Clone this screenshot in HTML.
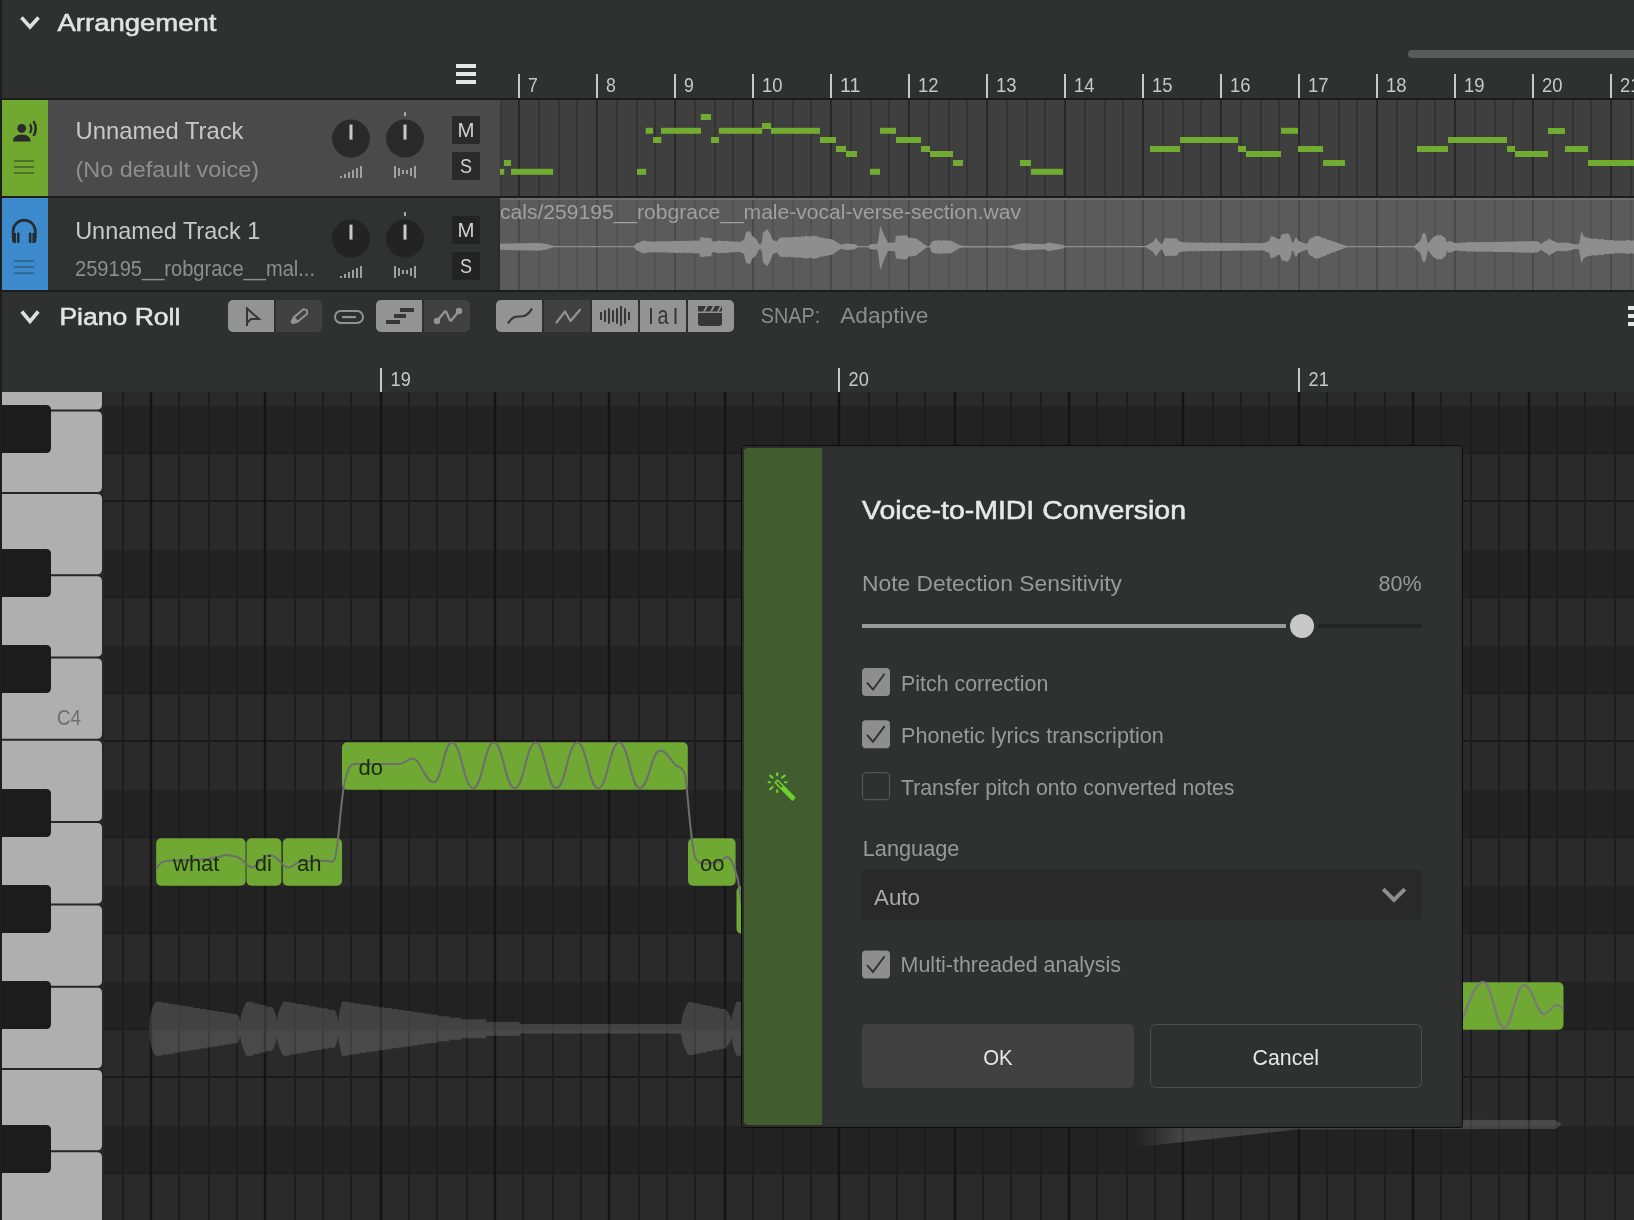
<!DOCTYPE html>
<html><head><meta charset="utf-8"><title>Voice-to-MIDI</title>
<style>html,body{margin:0;padding:0;background:#2f3030;overflow:hidden}svg{display:block;will-change:transform}text{font-family:"Liberation Sans", sans-serif}</style>
</head><body>
<svg width="1634" height="1220" viewBox="0 0 1634 1220">
<rect x="0" y="0" width="1634" height="1220" fill="#2f3030"/>
<path d="M21.5,17.5 L30,27 L38.5,17.5" fill="none" stroke="#e0e0e0" stroke-width="3.6" stroke-linecap="butt" stroke-linejoin="miter"/>
<text x="57.5" y="31" font-size="24.5" fill="#e2e2e2" font-weight="normal" text-anchor="start" textLength="159" lengthAdjust="spacingAndGlyphs" stroke="#e2e2e2" stroke-width="0.55">Arrangement</text>
<rect x="456" y="64" width="20" height="4" fill="#e6e6e6"/>
<rect x="456" y="72" width="20" height="4" fill="#e6e6e6"/>
<rect x="456" y="80" width="20" height="4" fill="#e6e6e6"/>
<rect x="1408" y="50" width="240" height="8" fill="#5a5a5a" rx="4"/>
<rect x="518" y="74" width="2" height="24" fill="#c8c8c8"/>
<text x="528" y="92" font-size="21" fill="#c8c8c8" font-weight="normal" text-anchor="start" textLength="9.8" lengthAdjust="spacingAndGlyphs">7</text>
<rect x="596" y="74" width="2" height="24" fill="#c8c8c8"/>
<text x="606" y="92" font-size="21" fill="#c8c8c8" font-weight="normal" text-anchor="start" textLength="9.8" lengthAdjust="spacingAndGlyphs">8</text>
<rect x="674" y="74" width="2" height="24" fill="#c8c8c8"/>
<text x="684" y="92" font-size="21" fill="#c8c8c8" font-weight="normal" text-anchor="start" textLength="9.8" lengthAdjust="spacingAndGlyphs">9</text>
<rect x="752" y="74" width="2" height="24" fill="#c8c8c8"/>
<text x="762" y="92" font-size="21" fill="#c8c8c8" font-weight="normal" text-anchor="start" textLength="20.5" lengthAdjust="spacingAndGlyphs">10</text>
<rect x="830" y="74" width="2" height="24" fill="#c8c8c8"/>
<text x="840" y="92" font-size="21" fill="#c8c8c8" font-weight="normal" text-anchor="start" textLength="20.5" lengthAdjust="spacingAndGlyphs">11</text>
<rect x="908" y="74" width="2" height="24" fill="#c8c8c8"/>
<text x="918" y="92" font-size="21" fill="#c8c8c8" font-weight="normal" text-anchor="start" textLength="20.5" lengthAdjust="spacingAndGlyphs">12</text>
<rect x="986" y="74" width="2" height="24" fill="#c8c8c8"/>
<text x="996" y="92" font-size="21" fill="#c8c8c8" font-weight="normal" text-anchor="start" textLength="20.5" lengthAdjust="spacingAndGlyphs">13</text>
<rect x="1064" y="74" width="2" height="24" fill="#c8c8c8"/>
<text x="1074" y="92" font-size="21" fill="#c8c8c8" font-weight="normal" text-anchor="start" textLength="20.5" lengthAdjust="spacingAndGlyphs">14</text>
<rect x="1142" y="74" width="2" height="24" fill="#c8c8c8"/>
<text x="1152" y="92" font-size="21" fill="#c8c8c8" font-weight="normal" text-anchor="start" textLength="20.5" lengthAdjust="spacingAndGlyphs">15</text>
<rect x="1220" y="74" width="2" height="24" fill="#c8c8c8"/>
<text x="1230" y="92" font-size="21" fill="#c8c8c8" font-weight="normal" text-anchor="start" textLength="20.5" lengthAdjust="spacingAndGlyphs">16</text>
<rect x="1298" y="74" width="2" height="24" fill="#c8c8c8"/>
<text x="1308" y="92" font-size="21" fill="#c8c8c8" font-weight="normal" text-anchor="start" textLength="20.5" lengthAdjust="spacingAndGlyphs">17</text>
<rect x="1376" y="74" width="2" height="24" fill="#c8c8c8"/>
<text x="1386" y="92" font-size="21" fill="#c8c8c8" font-weight="normal" text-anchor="start" textLength="20.5" lengthAdjust="spacingAndGlyphs">18</text>
<rect x="1454" y="74" width="2" height="24" fill="#c8c8c8"/>
<text x="1464" y="92" font-size="21" fill="#c8c8c8" font-weight="normal" text-anchor="start" textLength="20.5" lengthAdjust="spacingAndGlyphs">19</text>
<rect x="1532" y="74" width="2" height="24" fill="#c8c8c8"/>
<text x="1542" y="92" font-size="21" fill="#c8c8c8" font-weight="normal" text-anchor="start" textLength="20.5" lengthAdjust="spacingAndGlyphs">20</text>
<rect x="1610" y="74" width="2" height="24" fill="#c8c8c8"/>
<text x="1620" y="92" font-size="21" fill="#c8c8c8" font-weight="normal" text-anchor="start" textLength="20.5" lengthAdjust="spacingAndGlyphs">21</text>
<rect x="0" y="98" width="1634" height="2" fill="#1c1c1c"/>
<rect x="48" y="100" width="452.5" height="96" fill="#4a4a4a"/>
<rect x="2" y="100" width="46" height="96" fill="#70a830"/>
<rect x="500" y="100" width="1134" height="96" fill="#3f3f3f"/>
<rect x="518" y="100" width="2" height="96" fill="#282828"/>
<rect x="538" y="100" width="2" height="96" fill="#333333"/>
<rect x="558" y="100" width="2" height="96" fill="#333333"/>
<rect x="576" y="100" width="2" height="96" fill="#333333"/>
<rect x="596" y="100" width="2" height="96" fill="#282828"/>
<rect x="616" y="100" width="2" height="96" fill="#333333"/>
<rect x="636" y="100" width="2" height="96" fill="#333333"/>
<rect x="654" y="100" width="2" height="96" fill="#333333"/>
<rect x="674" y="100" width="2" height="96" fill="#282828"/>
<rect x="694" y="100" width="2" height="96" fill="#333333"/>
<rect x="714" y="100" width="2" height="96" fill="#333333"/>
<rect x="732" y="100" width="2" height="96" fill="#333333"/>
<rect x="752" y="100" width="2" height="96" fill="#282828"/>
<rect x="772" y="100" width="2" height="96" fill="#333333"/>
<rect x="792" y="100" width="2" height="96" fill="#333333"/>
<rect x="810" y="100" width="2" height="96" fill="#333333"/>
<rect x="830" y="100" width="2" height="96" fill="#282828"/>
<rect x="850" y="100" width="2" height="96" fill="#333333"/>
<rect x="870" y="100" width="2" height="96" fill="#333333"/>
<rect x="888" y="100" width="2" height="96" fill="#333333"/>
<rect x="908" y="100" width="2" height="96" fill="#282828"/>
<rect x="928" y="100" width="2" height="96" fill="#333333"/>
<rect x="948" y="100" width="2" height="96" fill="#333333"/>
<rect x="966" y="100" width="2" height="96" fill="#333333"/>
<rect x="986" y="100" width="2" height="96" fill="#282828"/>
<rect x="1006" y="100" width="2" height="96" fill="#333333"/>
<rect x="1026" y="100" width="2" height="96" fill="#333333"/>
<rect x="1044" y="100" width="2" height="96" fill="#333333"/>
<rect x="1064" y="100" width="2" height="96" fill="#282828"/>
<rect x="1084" y="100" width="2" height="96" fill="#333333"/>
<rect x="1104" y="100" width="2" height="96" fill="#333333"/>
<rect x="1122" y="100" width="2" height="96" fill="#333333"/>
<rect x="1142" y="100" width="2" height="96" fill="#282828"/>
<rect x="1162" y="100" width="2" height="96" fill="#333333"/>
<rect x="1182" y="100" width="2" height="96" fill="#333333"/>
<rect x="1200" y="100" width="2" height="96" fill="#333333"/>
<rect x="1220" y="100" width="2" height="96" fill="#282828"/>
<rect x="1240" y="100" width="2" height="96" fill="#333333"/>
<rect x="1260" y="100" width="2" height="96" fill="#333333"/>
<rect x="1278" y="100" width="2" height="96" fill="#333333"/>
<rect x="1298" y="100" width="2" height="96" fill="#282828"/>
<rect x="1318" y="100" width="2" height="96" fill="#333333"/>
<rect x="1338" y="100" width="2" height="96" fill="#333333"/>
<rect x="1356" y="100" width="2" height="96" fill="#333333"/>
<rect x="1376" y="100" width="2" height="96" fill="#282828"/>
<rect x="1396" y="100" width="2" height="96" fill="#333333"/>
<rect x="1416" y="100" width="2" height="96" fill="#333333"/>
<rect x="1434" y="100" width="2" height="96" fill="#333333"/>
<rect x="1454" y="100" width="2" height="96" fill="#282828"/>
<rect x="1474" y="100" width="2" height="96" fill="#333333"/>
<rect x="1494" y="100" width="2" height="96" fill="#333333"/>
<rect x="1512" y="100" width="2" height="96" fill="#333333"/>
<rect x="1532" y="100" width="2" height="96" fill="#282828"/>
<rect x="1552" y="100" width="2" height="96" fill="#333333"/>
<rect x="1572" y="100" width="2" height="96" fill="#333333"/>
<rect x="1590" y="100" width="2" height="96" fill="#333333"/>
<rect x="1610" y="100" width="2" height="96" fill="#282828"/>
<rect x="1630" y="100" width="2" height="96" fill="#333333"/>
<rect x="500.5" y="100" width="1.5" height="96" fill="#363636"/>
<rect x="500" y="168.8" width="4.2" height="6" fill="#71ab30"/>
<rect x="503.9" y="160" width="7.1" height="6" fill="#71ab30"/>
<rect x="511" y="168.8" width="42.1" height="6" fill="#71ab30"/>
<rect x="637" y="168.8" width="9.2" height="6" fill="#71ab30"/>
<rect x="645.7" y="127.8" width="7.3" height="6" fill="#71ab30"/>
<rect x="653" y="137" width="8.3" height="6" fill="#71ab30"/>
<rect x="661" y="127.8" width="40" height="6" fill="#71ab30"/>
<rect x="700.8" y="114" width="10.2" height="6" fill="#71ab30"/>
<rect x="711" y="137" width="8" height="6" fill="#71ab30"/>
<rect x="719" y="127.8" width="43.2" height="6" fill="#71ab30"/>
<rect x="762" y="123" width="9" height="6" fill="#71ab30"/>
<rect x="771" y="127.8" width="49" height="6" fill="#71ab30"/>
<rect x="820" y="137" width="16" height="6" fill="#71ab30"/>
<rect x="836" y="146" width="10" height="6" fill="#71ab30"/>
<rect x="846" y="151" width="11" height="6" fill="#71ab30"/>
<rect x="870" y="168.8" width="10" height="6" fill="#71ab30"/>
<rect x="880" y="127.8" width="16" height="6" fill="#71ab30"/>
<rect x="896" y="137" width="25" height="6" fill="#71ab30"/>
<rect x="921" y="146" width="9" height="6" fill="#71ab30"/>
<rect x="930" y="151" width="23" height="6" fill="#71ab30"/>
<rect x="953" y="160" width="10" height="6" fill="#71ab30"/>
<rect x="1020" y="160" width="11" height="6" fill="#71ab30"/>
<rect x="1031" y="168.8" width="32" height="6" fill="#71ab30"/>
<rect x="1150" y="146" width="30" height="6" fill="#71ab30"/>
<rect x="1180" y="137" width="58" height="6" fill="#71ab30"/>
<rect x="1238" y="146" width="8" height="6" fill="#71ab30"/>
<rect x="1246" y="151" width="35" height="6" fill="#71ab30"/>
<rect x="1281" y="127.8" width="17" height="6" fill="#71ab30"/>
<rect x="1298" y="146" width="25" height="6" fill="#71ab30"/>
<rect x="1323" y="160" width="22" height="6" fill="#71ab30"/>
<rect x="1417" y="146" width="31" height="6" fill="#71ab30"/>
<rect x="1448" y="137" width="59" height="6" fill="#71ab30"/>
<rect x="1507" y="146" width="8" height="6" fill="#71ab30"/>
<rect x="1515" y="151" width="33" height="6" fill="#71ab30"/>
<rect x="1548" y="128" width="17" height="6" fill="#71ab30"/>
<rect x="1565" y="146" width="23" height="6" fill="#71ab30"/>
<rect x="1588" y="160" width="46" height="6" fill="#71ab30"/>
<circle cx="21.7" cy="128.3" r="4.4" fill="#2b2b2b"/>
<path d="M13,141.5 C13,136.5 17,134.8 21.8,134.8 C26.6,134.8 30.6,136.5 30.6,141.5 Z" fill="#2b2b2b"/>
<path d="M30,124 Q32.5,128.5 30,133" fill="none" stroke="#2b2b2b" stroke-width="2.2"/>
<path d="M33.5,121 Q38,128.5 33.5,136" fill="none" stroke="#2b2b2b" stroke-width="2.4"/>
<rect x="14" y="160" width="20" height="2" fill="#4b7326"/>
<rect x="14" y="166" width="20" height="2" fill="#4b7326"/>
<rect x="14" y="172" width="20" height="2" fill="#4b7326"/>
<text x="75.5" y="138.7" font-size="24" fill="#c8c8c8" font-weight="normal" text-anchor="start" textLength="168" lengthAdjust="spacingAndGlyphs">Unnamed Track</text>
<text x="75.5" y="176.6" font-size="22.5" fill="#8e8e8e" font-weight="normal" text-anchor="start" textLength="183.5" lengthAdjust="spacingAndGlyphs">(No default voice)</text>
<circle cx="351" cy="138.6" r="19" fill="#2a2a2a"/>
<rect x="349.5" y="124.6" width="3" height="15" fill="#c8c8c8"/>
<circle cx="405" cy="138.6" r="19" fill="#2a2a2a"/>
<rect x="403.5" y="124.6" width="3" height="15" fill="#c8c8c8"/>
<rect x="404" y="112.1" width="2" height="4" fill="#a8a8a8"/>
<rect x="340" y="176.1" width="2" height="1.9000000000000057" fill="#a0a0a0"/>
<rect x="344" y="174.0" width="2" height="4" fill="#a0a0a0"/>
<rect x="348" y="172.0" width="2" height="6" fill="#a0a0a0"/>
<rect x="352" y="169.9" width="2" height="8.099999999999994" fill="#a0a0a0"/>
<rect x="356" y="168.0" width="2" height="10" fill="#a0a0a0"/>
<rect x="360" y="166.0" width="2" height="12" fill="#a0a0a0"/>
<rect x="394" y="166.0" width="2" height="12" fill="#a0a0a0"/>
<rect x="398" y="168.0" width="2" height="8" fill="#a0a0a0"/>
<rect x="402" y="170.0" width="2" height="4" fill="#a0a0a0"/>
<rect x="406" y="170.0" width="2" height="4" fill="#a0a0a0"/>
<rect x="410" y="168.0" width="2" height="8" fill="#a0a0a0"/>
<rect x="414" y="166.0" width="2" height="12" fill="#a0a0a0"/>
<rect x="452" y="116.0" width="28" height="28" fill="#2a2a2a"/>
<rect x="452" y="152.0" width="28" height="28" fill="#2a2a2a"/>
<text x="466" y="137.29999999999998" font-size="20" fill="#d0d0d0" font-weight="normal" text-anchor="middle" textLength="17" lengthAdjust="spacingAndGlyphs">M</text>
<text x="466" y="173.3" font-size="20" fill="#d0d0d0" font-weight="normal" text-anchor="middle" textLength="12" lengthAdjust="spacingAndGlyphs">S</text>
<rect x="0" y="196" width="1634" height="2" fill="#1c1c1c"/>
<rect x="48" y="198" width="452" height="92" fill="#303232"/>
<rect x="2" y="198" width="46" height="92" fill="#3d8bcc"/>
<path d="M13.1,238 L13.1,231.2 A11.1,11.1 0 0 1 35.3,231.2 L35.3,238" fill="none" stroke="#262b30" stroke-width="2.6"/>
<path d="M16,233 L16,243 L14.5,243 Q12,243 12,240 L12,236 Q12,233 14.5,233 Z" fill="#262b30"/>
<path d="M32.4,233 L32.4,243 L33.9,243 Q36.4,243 36.4,240 L36.4,236 Q36.4,233 33.9,233 Z" fill="#262b30"/>
<rect x="17" y="232.5" width="2.5" height="10.5" fill="#262b30" rx="0.8"/>
<rect x="28.9" y="232.5" width="2.5" height="10.5" fill="#262b30" rx="0.8"/>
<rect x="14" y="260" width="20" height="2" fill="#2d6a9a"/>
<rect x="14" y="266" width="20" height="2" fill="#2d6a9a"/>
<rect x="14" y="272.2" width="20" height="2" fill="#2d6a9a"/>
<text x="75.2" y="238.8" font-size="24" fill="#c8c8c8" font-weight="normal" text-anchor="start" textLength="185" lengthAdjust="spacingAndGlyphs">Unnamed Track 1</text>
<text x="75" y="275.8" font-size="22.5" fill="#8e8e8e" font-weight="normal" text-anchor="start" textLength="240" lengthAdjust="spacingAndGlyphs">259195__robgrace__mal...</text>
<circle cx="351" cy="238.6" r="19" fill="#232323"/>
<rect x="349.5" y="224.6" width="3" height="15" fill="#c8c8c8"/>
<circle cx="405" cy="238.6" r="19" fill="#232323"/>
<rect x="403.5" y="224.6" width="3" height="15" fill="#c8c8c8"/>
<rect x="404" y="212.1" width="2" height="4" fill="#a8a8a8"/>
<rect x="340" y="276.1" width="2" height="1.9000000000000057" fill="#a0a0a0"/>
<rect x="344" y="274.0" width="2" height="4" fill="#a0a0a0"/>
<rect x="348" y="272.0" width="2" height="6" fill="#a0a0a0"/>
<rect x="352" y="269.9" width="2" height="8.099999999999994" fill="#a0a0a0"/>
<rect x="356" y="268.0" width="2" height="10" fill="#a0a0a0"/>
<rect x="360" y="266.0" width="2" height="12" fill="#a0a0a0"/>
<rect x="394" y="266.0" width="2" height="12" fill="#a0a0a0"/>
<rect x="398" y="268.0" width="2" height="8" fill="#a0a0a0"/>
<rect x="402" y="270.0" width="2" height="4" fill="#a0a0a0"/>
<rect x="406" y="270.0" width="2" height="4" fill="#a0a0a0"/>
<rect x="410" y="268.0" width="2" height="8" fill="#a0a0a0"/>
<rect x="414" y="266.0" width="2" height="12" fill="#a0a0a0"/>
<rect x="452" y="216.0" width="28" height="28" fill="#232323"/>
<rect x="452" y="252.0" width="28" height="28" fill="#232323"/>
<text x="466" y="237.29999999999998" font-size="20" fill="#d0d0d0" font-weight="normal" text-anchor="middle" textLength="17" lengthAdjust="spacingAndGlyphs">M</text>
<text x="466" y="273.3" font-size="20" fill="#d0d0d0" font-weight="normal" text-anchor="middle" textLength="12" lengthAdjust="spacingAndGlyphs">S</text>
<rect x="500" y="198" width="1134" height="92" fill="#5b5b5b"/>
<rect x="518" y="200" width="2" height="90" fill="#4a4a4a"/>
<rect x="538" y="200" width="2" height="90" fill="#525252"/>
<rect x="558" y="200" width="2" height="90" fill="#525252"/>
<rect x="576" y="200" width="2" height="90" fill="#525252"/>
<rect x="596" y="200" width="2" height="90" fill="#4a4a4a"/>
<rect x="616" y="200" width="2" height="90" fill="#525252"/>
<rect x="636" y="200" width="2" height="90" fill="#525252"/>
<rect x="654" y="200" width="2" height="90" fill="#525252"/>
<rect x="674" y="200" width="2" height="90" fill="#4a4a4a"/>
<rect x="694" y="200" width="2" height="90" fill="#525252"/>
<rect x="714" y="200" width="2" height="90" fill="#525252"/>
<rect x="732" y="200" width="2" height="90" fill="#525252"/>
<rect x="752" y="200" width="2" height="90" fill="#4a4a4a"/>
<rect x="772" y="200" width="2" height="90" fill="#525252"/>
<rect x="792" y="200" width="2" height="90" fill="#525252"/>
<rect x="810" y="200" width="2" height="90" fill="#525252"/>
<rect x="830" y="200" width="2" height="90" fill="#4a4a4a"/>
<rect x="850" y="200" width="2" height="90" fill="#525252"/>
<rect x="870" y="200" width="2" height="90" fill="#525252"/>
<rect x="888" y="200" width="2" height="90" fill="#525252"/>
<rect x="908" y="200" width="2" height="90" fill="#4a4a4a"/>
<rect x="928" y="200" width="2" height="90" fill="#525252"/>
<rect x="948" y="200" width="2" height="90" fill="#525252"/>
<rect x="966" y="200" width="2" height="90" fill="#525252"/>
<rect x="986" y="200" width="2" height="90" fill="#4a4a4a"/>
<rect x="1006" y="200" width="2" height="90" fill="#525252"/>
<rect x="1026" y="200" width="2" height="90" fill="#525252"/>
<rect x="1044" y="200" width="2" height="90" fill="#525252"/>
<rect x="1064" y="200" width="2" height="90" fill="#4a4a4a"/>
<rect x="1084" y="200" width="2" height="90" fill="#525252"/>
<rect x="1104" y="200" width="2" height="90" fill="#525252"/>
<rect x="1122" y="200" width="2" height="90" fill="#525252"/>
<rect x="1142" y="200" width="2" height="90" fill="#4a4a4a"/>
<rect x="1162" y="200" width="2" height="90" fill="#525252"/>
<rect x="1182" y="200" width="2" height="90" fill="#525252"/>
<rect x="1200" y="200" width="2" height="90" fill="#525252"/>
<rect x="1220" y="200" width="2" height="90" fill="#4a4a4a"/>
<rect x="1240" y="200" width="2" height="90" fill="#525252"/>
<rect x="1260" y="200" width="2" height="90" fill="#525252"/>
<rect x="1278" y="200" width="2" height="90" fill="#525252"/>
<rect x="1298" y="200" width="2" height="90" fill="#4a4a4a"/>
<rect x="1318" y="200" width="2" height="90" fill="#525252"/>
<rect x="1338" y="200" width="2" height="90" fill="#525252"/>
<rect x="1356" y="200" width="2" height="90" fill="#525252"/>
<rect x="1376" y="200" width="2" height="90" fill="#4a4a4a"/>
<rect x="1396" y="200" width="2" height="90" fill="#525252"/>
<rect x="1416" y="200" width="2" height="90" fill="#525252"/>
<rect x="1434" y="200" width="2" height="90" fill="#525252"/>
<rect x="1454" y="200" width="2" height="90" fill="#4a4a4a"/>
<rect x="1474" y="200" width="2" height="90" fill="#525252"/>
<rect x="1494" y="200" width="2" height="90" fill="#525252"/>
<rect x="1512" y="200" width="2" height="90" fill="#525252"/>
<rect x="1532" y="200" width="2" height="90" fill="#4a4a4a"/>
<rect x="1552" y="200" width="2" height="90" fill="#525252"/>
<rect x="1572" y="200" width="2" height="90" fill="#525252"/>
<rect x="1590" y="200" width="2" height="90" fill="#525252"/>
<rect x="1610" y="200" width="2" height="90" fill="#4a4a4a"/>
<rect x="1630" y="200" width="2" height="90" fill="#525252"/>
<rect x="500" y="198" width="1134" height="2" fill="#6c6c6c"/>
<rect x="498" y="198" width="2" height="92" fill="#2a2a2a"/>
<text x="500" y="219.4" font-size="20.5" fill="#a0a0a0" font-weight="normal" text-anchor="start" textLength="521" lengthAdjust="spacingAndGlyphs">cals/259195__robgrace__male-vocal-verse-section.wav</text>
<polygon points="500.0,243.7 501.0,243.7 502.0,243.5 503.0,243.7 504.0,243.5 505.0,243.6 506.0,243.7 507.0,243.5 508.0,243.6 509.0,243.5 510.0,243.6 511.0,243.6 512.0,243.4 513.0,243.2 514.0,243.5 515.0,243.4 516.0,243.3 517.0,243.1 518.0,243.2 519.0,243.3 520.0,243.0 521.0,243.4 522.0,243.1 523.0,243.3 524.0,243.3 525.0,243.3 526.0,243.2 527.0,243.0 528.0,243.2 529.0,243.0 530.0,243.0 531.0,243.1 532.0,243.0 533.0,243.2 534.0,243.2 535.0,243.1 536.0,242.9 537.0,243.0 538.0,243.0 539.0,242.9 540.0,243.1 541.0,243.3 542.0,243.3 543.0,243.5 544.0,243.8 545.0,243.9 546.0,244.1 547.0,244.1 548.0,244.3 549.0,244.7 550.0,244.9 551.0,245.2 552.0,245.5 553.0,245.8 554.0,246.0 555.0,246.0 556.0,246.0 557.0,246.0 558.0,246.0 559.0,246.0 560.0,246.0 561.0,246.0 562.0,246.0 563.0,246.0 564.0,246.0 565.0,246.0 566.0,246.0 567.0,246.0 568.0,246.0 569.0,246.0 570.0,246.0 571.0,246.0 572.0,246.0 573.0,246.0 574.0,246.0 575.0,246.0 576.0,246.0 577.0,246.0 578.0,246.0 579.0,246.0 580.0,246.0 581.0,246.0 582.0,246.0 583.0,246.0 584.0,246.0 585.0,246.0 586.0,246.0 587.0,246.0 588.0,246.0 589.0,246.0 590.0,246.0 591.0,246.0 592.0,246.0 593.0,246.0 594.0,246.0 595.0,246.0 596.0,246.0 597.0,246.0 598.0,246.0 599.0,246.0 600.0,246.0 601.0,246.0 602.0,246.0 603.0,246.0 604.0,246.0 605.0,246.0 606.0,246.0 607.0,246.0 608.0,246.0 609.0,246.0 610.0,246.0 611.0,246.0 612.0,246.0 613.0,246.0 614.0,246.0 615.0,246.0 616.0,246.0 617.0,246.0 618.0,246.0 619.0,246.0 620.0,246.0 621.0,246.0 622.0,246.0 623.0,246.0 624.0,246.0 625.0,246.0 626.0,246.0 627.0,246.0 628.0,246.0 629.0,246.0 630.0,246.0 631.0,246.0 632.0,246.0 633.0,246.0 634.0,245.8 635.0,244.8 636.0,243.6 637.0,243.1 638.0,242.9 639.0,242.4 640.0,242.2 641.0,241.4 642.0,241.0 643.0,240.7 644.0,240.5 645.0,241.0 646.0,240.9 647.0,241.2 648.0,241.3 649.0,241.6 650.0,241.4 651.0,241.3 652.0,241.6 653.0,241.4 654.0,241.8 655.0,241.4 656.0,241.4 657.0,241.1 658.0,241.2 659.0,241.5 660.0,241.5 661.0,241.3 662.0,241.6 663.0,241.3 664.0,241.5 665.0,241.5 666.0,241.5 667.0,241.1 668.0,241.5 669.0,241.4 670.0,241.3 671.0,240.9 672.0,241.4 673.0,241.2 674.0,241.1 675.0,240.8 676.0,240.9 677.0,240.8 678.0,241.2 679.0,241.1 680.0,241.1 681.0,240.7 682.0,240.6 683.0,241.2 684.0,241.1 685.0,241.1 686.0,241.0 687.0,240.9 688.0,240.8 689.0,241.0 690.0,241.1 691.0,240.8 692.0,240.8 693.0,240.7 694.0,240.4 695.0,240.5 696.0,240.7 697.0,240.6 698.0,240.5 699.0,240.9 700.0,238.5 701.0,237.3 702.0,237.2 703.0,237.3 704.0,237.7 705.0,237.7 706.0,238.0 707.0,237.5 708.0,238.1 709.0,238.1 710.0,237.9 711.0,238.0 712.0,240.6 713.0,241.8 714.0,241.6 715.0,241.4 716.0,241.3 717.0,240.9 718.0,241.0 719.0,240.4 720.0,240.6 721.0,241.0 722.0,241.0 723.0,240.9 724.0,241.0 725.0,241.2 726.0,240.8 727.0,240.7 728.0,241.1 729.0,241.2 730.0,241.5 731.0,241.5 732.0,241.5 733.0,241.6 734.0,241.3 735.0,241.8 736.0,242.0 737.0,241.5 738.0,241.8 739.0,242.0 740.0,241.5 741.0,241.6 742.0,241.0 743.0,240.3 744.0,240.1 745.0,236.0 746.0,232.5 747.0,231.4 748.0,231.8 749.0,230.7 750.0,231.5 751.0,233.0 752.0,235.5 753.0,236.6 754.0,236.9 755.0,237.8 756.0,238.9 757.0,240.0 758.0,242.4 759.0,244.0 760.0,244.2 761.0,244.1 762.0,240.6 763.0,232.4 764.0,231.8 765.0,230.7 766.0,230.1 767.0,229.1 768.0,230.0 769.0,232.3 770.0,233.1 771.0,235.4 772.0,237.9 773.0,239.9 774.0,240.4 775.0,240.7 776.0,241.1 777.0,241.4 778.0,240.1 779.0,238.8 780.0,237.9 781.0,237.5 782.0,237.3 783.0,237.2 784.0,238.0 785.0,237.3 786.0,237.1 787.0,237.2 788.0,237.2 789.0,237.5 790.0,237.8 791.0,237.0 792.0,237.5 793.0,236.9 794.0,236.6 795.0,237.2 796.0,237.1 797.0,236.4 798.0,236.6 799.0,237.2 800.0,237.2 801.0,237.1 802.0,236.1 803.0,236.2 804.0,236.9 805.0,236.0 806.0,235.8 807.0,236.1 808.0,236.5 809.0,236.2 810.0,236.6 811.0,236.7 812.0,235.5 813.0,235.8 814.0,236.0 815.0,235.7 816.0,236.5 817.0,236.2 818.0,236.4 819.0,237.3 820.0,237.5 821.0,237.6 822.0,237.8 823.0,237.6 824.0,238.2 825.0,238.2 826.0,238.7 827.0,238.1 828.0,238.9 829.0,239.0 830.0,239.0 831.0,239.0 832.0,239.6 833.0,239.5 834.0,240.4 835.0,241.0 836.0,241.5 837.0,242.4 838.0,242.7 839.0,243.4 840.0,244.0 841.0,244.4 842.0,244.7 843.0,244.4 844.0,244.0 845.0,243.7 846.0,243.5 847.0,243.5 848.0,243.5 849.0,243.5 850.0,243.9 851.0,243.8 852.0,244.0 853.0,244.0 854.0,243.9 855.0,244.2 856.0,244.8 857.0,245.5 858.0,246.0 859.0,246.0 860.0,246.0 861.0,246.0 862.0,246.0 863.0,246.0 864.0,246.0 865.0,246.0 866.0,246.0 867.0,246.0 868.0,246.0 869.0,245.4 870.0,244.7 871.0,244.0 872.0,244.1 873.0,244.1 874.0,244.1 875.0,244.1 876.0,244.0 877.0,244.1 878.0,241.4 879.0,234.6 880.0,226.9 881.0,226.2 882.0,230.2 883.0,232.2 884.0,235.2 885.0,236.8 886.0,238.4 887.0,240.6 888.0,242.8 889.0,242.8 890.0,242.6 891.0,242.8 892.0,242.7 893.0,242.8 894.0,242.5 895.0,242.5 896.0,235.5 897.0,236.4 898.0,235.6 899.0,235.6 900.0,236.2 901.0,235.2 902.0,235.0 903.0,235.9 904.0,234.9 905.0,235.5 906.0,235.3 907.0,235.4 908.0,236.6 909.0,237.9 910.0,237.7 911.0,237.7 912.0,238.0 913.0,238.2 914.0,238.2 915.0,237.9 916.0,238.8 917.0,239.0 918.0,239.8 919.0,240.8 920.0,241.3 921.0,241.8 922.0,242.6 923.0,243.5 924.0,243.9 925.0,244.7 926.0,245.4 927.0,246.0 928.0,246.0 929.0,246.0 930.0,245.6 931.0,243.2 932.0,241.5 933.0,241.1 934.0,241.1 935.0,240.3 936.0,240.6 937.0,240.7 938.0,240.5 939.0,240.1 940.0,240.2 941.0,240.6 942.0,240.7 943.0,240.1 944.0,240.3 945.0,240.3 946.0,240.7 947.0,240.7 948.0,240.3 949.0,240.5 950.0,240.7 951.0,240.4 952.0,241.2 953.0,241.6 954.0,242.5 955.0,242.6 956.0,243.4 957.0,243.7 958.0,244.3 959.0,244.8 960.0,245.3 961.0,245.6 962.0,245.6 963.0,245.7 964.0,245.7 965.0,245.7 966.0,245.8 967.0,245.8 968.0,245.8 969.0,245.9 970.0,245.9 971.0,245.9 972.0,245.9 973.0,245.9 974.0,245.9 975.0,245.9 976.0,245.9 977.0,245.9 978.0,245.9 979.0,245.9 980.0,245.9 981.0,245.9 982.0,245.9 983.0,245.9 984.0,245.9 985.0,245.9 986.0,245.9 987.0,245.9 988.0,245.9 989.0,245.9 990.0,245.9 991.0,245.9 992.0,245.9 993.0,245.9 994.0,245.9 995.0,245.9 996.0,245.9 997.0,245.9 998.0,245.9 999.0,245.9 1000.0,245.9 1001.0,245.9 1002.0,245.9 1003.0,245.9 1004.0,245.9 1005.0,245.9 1006.0,245.9 1007.0,245.9 1008.0,245.9 1009.0,245.7 1010.0,245.6 1011.0,245.5 1012.0,245.4 1013.0,245.2 1014.0,244.9 1015.0,244.6 1016.0,244.5 1017.0,244.3 1018.0,243.9 1019.0,243.8 1020.0,243.7 1021.0,243.6 1022.0,243.5 1023.0,243.4 1024.0,243.3 1025.0,243.3 1026.0,243.2 1027.0,243.4 1028.0,243.4 1029.0,243.6 1030.0,243.6 1031.0,243.7 1032.0,243.7 1033.0,243.8 1034.0,243.6 1035.0,243.7 1036.0,243.9 1037.0,243.9 1038.0,243.8 1039.0,244.1 1040.0,243.9 1041.0,244.1 1042.0,244.1 1043.0,244.0 1044.0,244.2 1045.0,243.9 1046.0,243.5 1047.0,243.0 1048.0,242.9 1049.0,242.5 1050.0,242.7 1051.0,242.9 1052.0,243.1 1053.0,243.3 1054.0,243.6 1055.0,243.7 1056.0,243.9 1057.0,243.8 1058.0,244.1 1059.0,244.3 1060.0,244.4 1061.0,244.4 1062.0,244.6 1063.0,245.1 1064.0,245.6 1065.0,246.0 1066.0,246.0 1067.0,246.0 1068.0,246.0 1069.0,246.0 1070.0,246.0 1071.0,246.0 1072.0,246.0 1073.0,246.0 1074.0,246.0 1075.0,246.0 1076.0,246.0 1077.0,246.0 1078.0,246.0 1079.0,246.0 1080.0,246.0 1081.0,246.0 1082.0,246.0 1083.0,246.0 1084.0,246.0 1085.0,246.0 1086.0,246.0 1087.0,246.0 1088.0,246.0 1089.0,246.0 1090.0,246.0 1091.0,246.0 1092.0,246.0 1093.0,246.0 1094.0,246.0 1095.0,246.0 1096.0,246.0 1097.0,246.0 1098.0,246.0 1099.0,246.0 1100.0,246.0 1101.0,246.0 1102.0,246.0 1103.0,246.0 1104.0,246.0 1105.0,246.0 1106.0,246.0 1107.0,246.0 1108.0,246.0 1109.0,246.0 1110.0,246.0 1111.0,246.0 1112.0,246.0 1113.0,246.0 1114.0,246.0 1115.0,246.0 1116.0,246.0 1117.0,246.0 1118.0,246.0 1119.0,246.0 1120.0,246.0 1121.0,246.0 1122.0,246.0 1123.0,246.0 1124.0,246.0 1125.0,246.0 1126.0,246.0 1127.0,246.0 1128.0,246.0 1129.0,246.0 1130.0,246.0 1131.0,246.0 1132.0,246.0 1133.0,246.0 1134.0,246.0 1135.0,246.0 1136.0,246.0 1137.0,246.0 1138.0,246.0 1139.0,246.0 1140.0,246.0 1141.0,246.0 1142.0,246.0 1143.0,246.0 1144.0,246.0 1145.0,246.0 1146.0,245.8 1147.0,245.3 1148.0,244.6 1149.0,244.2 1150.0,243.6 1151.0,243.0 1152.0,242.4 1153.0,242.0 1154.0,240.6 1155.0,239.5 1156.0,237.6 1157.0,238.9 1158.0,240.6 1159.0,242.0 1160.0,242.8 1161.0,243.9 1162.0,244.2 1163.0,242.3 1164.0,239.9 1165.0,238.1 1166.0,238.1 1167.0,238.4 1168.0,238.1 1169.0,238.6 1170.0,238.3 1171.0,238.5 1172.0,238.2 1173.0,238.6 1174.0,238.6 1175.0,238.3 1176.0,238.4 1177.0,238.6 1178.0,239.9 1179.0,241.0 1180.0,241.8 1181.0,241.8 1182.0,241.8 1183.0,242.2 1184.0,242.3 1185.0,242.0 1186.0,242.6 1187.0,242.4 1188.0,242.5 1189.0,242.8 1190.0,242.4 1191.0,242.4 1192.0,242.5 1193.0,242.5 1194.0,242.5 1195.0,242.8 1196.0,242.6 1197.0,242.6 1198.0,242.4 1199.0,242.5 1200.0,242.4 1201.0,242.6 1202.0,242.4 1203.0,242.5 1204.0,242.5 1205.0,242.8 1206.0,242.9 1207.0,242.8 1208.0,242.7 1209.0,242.9 1210.0,242.5 1211.0,242.7 1212.0,242.7 1213.0,242.7 1214.0,242.6 1215.0,242.7 1216.0,243.0 1217.0,242.6 1218.0,242.7 1219.0,242.8 1220.0,242.8 1221.0,242.7 1222.0,243.0 1223.0,242.7 1224.0,242.9 1225.0,243.0 1226.0,243.0 1227.0,242.8 1228.0,243.0 1229.0,242.8 1230.0,242.7 1231.0,242.9 1232.0,243.0 1233.0,242.9 1234.0,242.8 1235.0,242.8 1236.0,242.9 1237.0,242.9 1238.0,243.1 1239.0,243.1 1240.0,243.1 1241.0,242.9 1242.0,243.1 1243.0,243.0 1244.0,243.2 1245.0,243.2 1246.0,243.1 1247.0,243.0 1248.0,243.0 1249.0,243.0 1250.0,243.2 1251.0,243.1 1252.0,243.1 1253.0,243.1 1254.0,243.3 1255.0,243.0 1256.0,243.3 1257.0,242.9 1258.0,243.0 1259.0,243.4 1260.0,243.2 1261.0,243.0 1262.0,243.0 1263.0,243.2 1264.0,243.0 1265.0,242.7 1266.0,241.9 1267.0,241.9 1268.0,241.3 1269.0,241.2 1270.0,238.7 1271.0,235.8 1272.0,236.7 1273.0,236.3 1274.0,237.2 1275.0,237.2 1276.0,237.9 1277.0,238.8 1278.0,238.6 1279.0,239.5 1280.0,238.4 1281.0,236.2 1282.0,234.3 1283.0,234.0 1284.0,234.0 1285.0,234.0 1286.0,233.4 1287.0,233.4 1288.0,233.0 1289.0,234.8 1290.0,235.4 1291.0,238.7 1292.0,242.5 1293.0,242.8 1294.0,240.9 1295.0,238.6 1296.0,237.2 1297.0,238.3 1298.0,240.3 1299.0,240.9 1300.0,241.5 1301.0,242.0 1302.0,242.3 1303.0,242.7 1304.0,243.1 1305.0,243.4 1306.0,243.5 1307.0,244.0 1308.0,241.9 1309.0,240.0 1310.0,238.8 1311.0,238.2 1312.0,238.1 1313.0,237.6 1314.0,236.5 1315.0,236.2 1316.0,235.9 1317.0,235.9 1318.0,235.8 1319.0,236.1 1320.0,236.8 1321.0,236.9 1322.0,237.9 1323.0,237.5 1324.0,238.2 1325.0,238.2 1326.0,238.7 1327.0,239.4 1328.0,239.9 1329.0,239.5 1330.0,240.5 1331.0,240.6 1332.0,241.0 1333.0,241.4 1334.0,241.5 1335.0,241.7 1336.0,242.4 1337.0,242.6 1338.0,243.1 1339.0,243.3 1340.0,243.7 1341.0,244.1 1342.0,244.4 1343.0,244.7 1344.0,244.9 1345.0,245.4 1346.0,245.7 1347.0,246.0 1348.0,246.0 1349.0,246.0 1350.0,246.0 1351.0,246.0 1352.0,246.0 1353.0,246.0 1354.0,246.0 1355.0,246.0 1356.0,246.0 1357.0,246.0 1358.0,246.0 1359.0,246.0 1360.0,246.0 1361.0,246.0 1362.0,246.0 1363.0,246.0 1364.0,246.0 1365.0,246.0 1366.0,246.0 1367.0,246.0 1368.0,246.0 1369.0,246.0 1370.0,246.0 1371.0,246.0 1372.0,246.0 1373.0,246.0 1374.0,246.0 1375.0,246.0 1376.0,246.0 1377.0,246.0 1378.0,246.0 1379.0,246.0 1380.0,246.0 1381.0,246.0 1382.0,246.0 1383.0,246.0 1384.0,246.0 1385.0,246.0 1386.0,246.0 1387.0,246.0 1388.0,246.0 1389.0,246.0 1390.0,246.0 1391.0,246.0 1392.0,246.0 1393.0,246.0 1394.0,246.0 1395.0,246.0 1396.0,246.0 1397.0,246.0 1398.0,246.0 1399.0,246.0 1400.0,246.0 1401.0,246.0 1402.0,246.0 1403.0,246.0 1404.0,246.0 1405.0,246.0 1406.0,246.0 1407.0,246.0 1408.0,246.0 1409.0,246.0 1410.0,246.0 1411.0,246.0 1412.0,246.0 1413.0,246.0 1414.0,246.0 1415.0,245.2 1416.0,244.1 1417.0,243.5 1418.0,242.5 1419.0,241.7 1420.0,241.3 1421.0,239.1 1422.0,235.3 1423.0,233.3 1424.0,232.9 1425.0,233.3 1426.0,235.0 1427.0,240.1 1428.0,243.7 1429.0,242.2 1430.0,240.9 1431.0,239.8 1432.0,238.5 1433.0,237.5 1434.0,237.0 1435.0,236.3 1436.0,236.0 1437.0,235.3 1438.0,234.4 1439.0,235.7 1440.0,235.2 1441.0,235.1 1442.0,235.3 1443.0,236.7 1444.0,237.1 1445.0,237.6 1446.0,239.6 1447.0,242.6 1448.0,241.7 1449.0,241.2 1450.0,240.8 1451.0,241.7 1452.0,242.1 1453.0,242.1 1454.0,242.4 1455.0,243.0 1456.0,243.1 1457.0,243.3 1458.0,243.1 1459.0,242.8 1460.0,242.7 1461.0,242.6 1462.0,242.5 1463.0,242.8 1464.0,242.8 1465.0,242.7 1466.0,242.4 1467.0,242.2 1468.0,242.1 1469.0,242.2 1470.0,242.2 1471.0,242.1 1472.0,242.3 1473.0,242.2 1474.0,242.5 1475.0,242.0 1476.0,242.3 1477.0,241.9 1478.0,242.1 1479.0,242.2 1480.0,242.3 1481.0,242.2 1482.0,242.0 1483.0,242.0 1484.0,242.3 1485.0,242.3 1486.0,242.0 1487.0,242.0 1488.0,242.1 1489.0,242.2 1490.0,241.9 1491.0,242.3 1492.0,242.1 1493.0,242.0 1494.0,241.7 1495.0,241.8 1496.0,241.7 1497.0,241.9 1498.0,242.0 1499.0,242.0 1500.0,241.6 1501.0,241.7 1502.0,241.9 1503.0,242.1 1504.0,241.8 1505.0,241.7 1506.0,241.8 1507.0,241.9 1508.0,241.6 1509.0,241.4 1510.0,241.8 1511.0,241.9 1512.0,241.7 1513.0,241.6 1514.0,241.4 1515.0,241.7 1516.0,241.3 1517.0,241.3 1518.0,241.4 1519.0,241.6 1520.0,241.1 1521.0,241.5 1522.0,241.1 1523.0,241.5 1524.0,241.4 1525.0,241.1 1526.0,241.3 1527.0,240.9 1528.0,241.2 1529.0,241.3 1530.0,241.3 1531.0,241.1 1532.0,240.9 1533.0,240.7 1534.0,241.3 1535.0,241.3 1536.0,241.5 1537.0,241.2 1538.0,241.8 1539.0,242.0 1540.0,242.9 1541.0,244.0 1542.0,243.2 1543.0,242.5 1544.0,242.0 1545.0,241.2 1546.0,240.6 1547.0,240.4 1548.0,239.7 1549.0,238.2 1550.0,238.9 1551.0,240.0 1552.0,240.0 1553.0,240.7 1554.0,241.2 1555.0,241.7 1556.0,242.3 1557.0,242.8 1558.0,242.7 1559.0,242.7 1560.0,242.4 1561.0,242.8 1562.0,242.4 1563.0,242.7 1564.0,242.7 1565.0,242.4 1566.0,242.4 1567.0,242.6 1568.0,243.0 1569.0,243.0 1570.0,243.3 1571.0,243.3 1572.0,243.8 1573.0,243.9 1574.0,244.0 1575.0,244.5 1576.0,244.6 1577.0,244.3 1578.0,244.1 1579.0,244.2 1580.0,239.0 1581.0,233.2 1582.0,231.8 1583.0,235.6 1584.0,236.5 1585.0,236.7 1586.0,237.6 1587.0,238.0 1588.0,237.6 1589.0,238.1 1590.0,238.5 1591.0,238.2 1592.0,238.7 1593.0,238.8 1594.0,239.1 1595.0,238.5 1596.0,238.5 1597.0,238.8 1598.0,238.7 1599.0,239.6 1600.0,239.5 1601.0,239.4 1602.0,239.0 1603.0,239.1 1604.0,239.7 1605.0,239.9 1606.0,239.9 1607.0,239.9 1608.0,239.7 1609.0,240.3 1610.0,240.0 1611.0,240.1 1612.0,240.1 1613.0,240.3 1614.0,240.5 1615.0,240.7 1616.0,240.7 1617.0,240.7 1618.0,240.4 1619.0,240.9 1620.0,240.8 1621.0,240.3 1622.0,240.7 1623.0,240.8 1624.0,240.8 1625.0,240.5 1626.0,240.6 1627.0,240.1 1628.0,240.2 1629.0,240.1 1630.0,240.6 1631.0,240.7 1632.0,240.7 1633.0,240.4 1634.0,240.2 1634.0,253.7 1633.0,253.5 1632.0,253.2 1631.0,253.2 1630.0,253.3 1629.0,253.9 1628.0,253.8 1627.0,253.9 1626.0,253.3 1625.0,253.5 1624.0,253.0 1623.0,253.1 1622.0,253.2 1621.0,253.6 1620.0,253.1 1619.0,253.0 1618.0,253.6 1617.0,253.2 1616.0,253.2 1615.0,253.2 1614.0,253.4 1613.0,253.7 1612.0,253.8 1611.0,253.9 1610.0,254.0 1609.0,253.6 1608.0,254.4 1607.0,254.1 1606.0,254.1 1605.0,254.1 1604.0,254.3 1603.0,254.9 1602.0,255.1 1601.0,254.7 1600.0,254.6 1599.0,254.5 1598.0,255.5 1597.0,255.3 1596.0,255.7 1595.0,255.6 1594.0,254.9 1593.0,255.3 1592.0,255.5 1591.0,256.0 1590.0,255.6 1589.0,256.1 1588.0,256.6 1587.0,256.2 1586.0,256.6 1585.0,257.7 1584.0,257.9 1583.0,259.0 1582.0,263.2 1581.0,261.6 1580.0,255.1 1579.0,249.3 1578.0,249.4 1577.0,249.1 1576.0,248.8 1575.0,249.0 1574.0,249.5 1573.0,249.6 1572.0,249.8 1571.0,250.3 1570.0,250.3 1569.0,250.6 1568.0,250.7 1567.0,251.0 1566.0,251.3 1565.0,251.3 1564.0,251.0 1563.0,250.9 1562.0,251.3 1561.0,250.9 1560.0,251.3 1559.0,251.0 1558.0,251.0 1557.0,250.8 1556.0,251.4 1555.0,252.1 1554.0,252.7 1553.0,253.2 1552.0,254.0 1551.0,254.0 1550.0,255.2 1549.0,256.0 1548.0,254.3 1547.0,253.6 1546.0,253.3 1545.0,252.7 1544.0,251.8 1543.0,251.1 1542.0,250.4 1541.0,249.5 1540.0,250.8 1539.0,251.7 1538.0,251.9 1537.0,252.7 1536.0,252.3 1535.0,252.6 1534.0,252.5 1533.0,253.2 1532.0,252.9 1531.0,252.7 1530.0,252.6 1529.0,252.5 1528.0,252.7 1527.0,253.0 1526.0,252.5 1525.0,252.8 1524.0,252.4 1523.0,252.4 1522.0,252.7 1521.0,252.4 1520.0,252.8 1519.0,252.2 1518.0,252.4 1517.0,252.5 1516.0,252.5 1515.0,252.1 1514.0,252.4 1513.0,252.2 1512.0,252.1 1511.0,251.9 1510.0,252.0 1509.0,252.4 1508.0,252.2 1507.0,251.9 1506.0,252.0 1505.0,252.1 1504.0,252.0 1503.0,251.7 1502.0,251.8 1501.0,252.1 1500.0,252.2 1499.0,251.7 1498.0,251.7 1497.0,251.9 1496.0,252.1 1495.0,251.9 1494.0,252.1 1493.0,251.8 1492.0,251.7 1491.0,251.5 1490.0,251.8 1489.0,251.6 1488.0,251.7 1487.0,251.8 1486.0,251.7 1485.0,251.4 1484.0,251.4 1483.0,251.8 1482.0,251.7 1481.0,251.5 1480.0,251.4 1479.0,251.5 1478.0,251.7 1477.0,251.8 1476.0,251.4 1475.0,251.7 1474.0,251.2 1473.0,251.5 1472.0,251.5 1471.0,251.6 1470.0,251.5 1469.0,251.6 1468.0,251.7 1467.0,251.5 1466.0,251.3 1465.0,251.0 1464.0,250.9 1463.0,250.9 1462.0,251.2 1461.0,251.0 1460.0,250.9 1459.0,250.9 1458.0,250.6 1457.0,250.3 1456.0,250.5 1455.0,250.7 1454.0,251.3 1453.0,251.7 1452.0,251.7 1451.0,252.0 1450.0,253.1 1449.0,252.6 1448.0,252.0 1447.0,251.1 1446.0,254.4 1445.0,256.7 1444.0,257.3 1443.0,257.7 1442.0,259.2 1441.0,259.5 1440.0,259.3 1439.0,258.8 1438.0,260.2 1437.0,259.2 1436.0,258.5 1435.0,258.1 1434.0,257.4 1433.0,256.8 1432.0,255.7 1431.0,254.2 1430.0,253.0 1429.0,251.5 1428.0,249.8 1427.0,253.9 1426.0,259.5 1425.0,261.5 1424.0,262.0 1423.0,261.5 1422.0,259.2 1421.0,255.1 1420.0,252.5 1419.0,252.1 1418.0,251.2 1417.0,250.1 1416.0,249.4 1415.0,248.2 1414.0,247.3 1413.0,247.3 1412.0,247.3 1411.0,247.3 1410.0,247.3 1409.0,247.3 1408.0,247.3 1407.0,247.3 1406.0,247.3 1405.0,247.3 1404.0,247.3 1403.0,247.3 1402.0,247.3 1401.0,247.3 1400.0,247.3 1399.0,247.3 1398.0,247.3 1397.0,247.3 1396.0,247.3 1395.0,247.3 1394.0,247.3 1393.0,247.3 1392.0,247.3 1391.0,247.3 1390.0,247.3 1389.0,247.3 1388.0,247.3 1387.0,247.3 1386.0,247.3 1385.0,247.3 1384.0,247.3 1383.0,247.3 1382.0,247.3 1381.0,247.3 1380.0,247.3 1379.0,247.3 1378.0,247.3 1377.0,247.3 1376.0,247.3 1375.0,247.3 1374.0,247.3 1373.0,247.3 1372.0,247.3 1371.0,247.3 1370.0,247.3 1369.0,247.3 1368.0,247.3 1367.0,247.3 1366.0,247.3 1365.0,247.3 1364.0,247.3 1363.0,247.3 1362.0,247.3 1361.0,247.3 1360.0,247.3 1359.0,247.3 1358.0,247.3 1357.0,247.3 1356.0,247.3 1355.0,247.3 1354.0,247.3 1353.0,247.3 1352.0,247.3 1351.0,247.3 1350.0,247.3 1349.0,247.3 1348.0,247.3 1347.0,247.3 1346.0,247.6 1345.0,248.0 1344.0,248.5 1343.0,248.7 1342.0,249.0 1341.0,249.4 1340.0,249.9 1339.0,250.3 1338.0,250.6 1337.0,251.1 1336.0,251.3 1335.0,252.1 1334.0,252.3 1333.0,252.4 1332.0,252.8 1331.0,253.3 1330.0,253.4 1329.0,254.5 1328.0,254.1 1327.0,254.7 1326.0,255.4 1325.0,256.0 1324.0,256.0 1323.0,256.7 1322.0,256.3 1321.0,257.5 1320.0,257.6 1319.0,258.4 1318.0,258.7 1317.0,258.6 1316.0,258.6 1315.0,258.2 1314.0,257.9 1313.0,256.7 1312.0,256.1 1311.0,256.0 1310.0,255.3 1309.0,254.0 1308.0,251.9 1307.0,249.5 1306.0,250.1 1305.0,250.2 1304.0,250.5 1303.0,251.0 1302.0,251.5 1301.0,251.8 1300.0,252.3 1299.0,253.0 1298.0,253.7 1297.0,255.9 1296.0,257.1 1295.0,255.5 1294.0,253.0 1293.0,250.8 1292.0,251.1 1291.0,255.4 1290.0,259.1 1289.0,259.8 1288.0,261.8 1287.0,261.4 1286.0,261.4 1285.0,260.8 1284.0,260.7 1283.0,260.7 1282.0,260.4 1281.0,258.2 1280.0,255.7 1279.0,254.6 1278.0,255.5 1277.0,255.3 1276.0,256.4 1275.0,257.1 1274.0,257.2 1273.0,258.1 1272.0,257.7 1271.0,258.7 1270.0,255.5 1269.0,252.6 1268.0,252.5 1267.0,251.8 1266.0,251.9 1265.0,251.0 1264.0,250.6 1263.0,250.4 1262.0,250.6 1261.0,250.6 1260.0,250.4 1259.0,250.2 1258.0,250.7 1257.0,250.7 1256.0,250.3 1255.0,250.7 1254.0,250.3 1253.0,250.5 1252.0,250.5 1251.0,250.5 1250.0,250.4 1249.0,250.6 1248.0,250.7 1247.0,250.7 1246.0,250.5 1245.0,250.4 1244.0,250.4 1243.0,250.7 1242.0,250.5 1241.0,250.8 1240.0,250.5 1239.0,250.5 1238.0,250.5 1237.0,250.8 1236.0,250.8 1235.0,250.8 1234.0,250.8 1233.0,250.7 1232.0,250.7 1231.0,250.7 1230.0,251.0 1229.0,250.9 1228.0,250.6 1227.0,250.9 1226.0,250.7 1225.0,250.6 1224.0,250.7 1223.0,251.0 1222.0,250.6 1221.0,250.9 1220.0,250.9 1219.0,250.9 1218.0,251.0 1217.0,251.1 1216.0,250.7 1215.0,250.9 1214.0,251.0 1213.0,251.0 1212.0,251.0 1211.0,251.0 1210.0,251.1 1209.0,250.8 1208.0,250.9 1207.0,250.8 1206.0,250.8 1205.0,250.9 1204.0,251.1 1203.0,251.1 1202.0,251.3 1201.0,251.1 1200.0,251.3 1199.0,251.2 1198.0,251.3 1197.0,251.1 1196.0,251.1 1195.0,250.9 1194.0,251.2 1193.0,251.2 1192.0,251.1 1191.0,251.3 1190.0,251.3 1189.0,250.8 1188.0,251.2 1187.0,251.3 1186.0,251.1 1185.0,251.7 1184.0,251.4 1183.0,251.6 1182.0,252.0 1181.0,252.0 1180.0,252.0 1179.0,252.8 1178.0,254.1 1177.0,255.5 1176.0,255.8 1175.0,255.9 1174.0,255.6 1173.0,255.6 1172.0,256.0 1171.0,255.7 1170.0,255.9 1169.0,255.6 1168.0,256.1 1167.0,255.8 1166.0,256.1 1165.0,256.1 1164.0,254.1 1163.0,251.4 1162.0,249.3 1161.0,249.6 1160.0,250.9 1159.0,251.8 1158.0,253.4 1157.0,255.2 1156.0,256.6 1155.0,254.5 1154.0,253.3 1153.0,251.8 1152.0,251.3 1151.0,250.6 1150.0,249.9 1149.0,249.3 1148.0,248.8 1147.0,248.1 1146.0,247.5 1145.0,247.3 1144.0,247.3 1143.0,247.3 1142.0,247.3 1141.0,247.3 1140.0,247.3 1139.0,247.3 1138.0,247.3 1137.0,247.3 1136.0,247.3 1135.0,247.3 1134.0,247.3 1133.0,247.3 1132.0,247.3 1131.0,247.3 1130.0,247.3 1129.0,247.3 1128.0,247.3 1127.0,247.3 1126.0,247.3 1125.0,247.3 1124.0,247.3 1123.0,247.3 1122.0,247.3 1121.0,247.3 1120.0,247.3 1119.0,247.3 1118.0,247.3 1117.0,247.3 1116.0,247.3 1115.0,247.3 1114.0,247.3 1113.0,247.3 1112.0,247.3 1111.0,247.3 1110.0,247.3 1109.0,247.3 1108.0,247.3 1107.0,247.3 1106.0,247.3 1105.0,247.3 1104.0,247.3 1103.0,247.3 1102.0,247.3 1101.0,247.3 1100.0,247.3 1099.0,247.3 1098.0,247.3 1097.0,247.3 1096.0,247.3 1095.0,247.3 1094.0,247.3 1093.0,247.3 1092.0,247.3 1091.0,247.3 1090.0,247.3 1089.0,247.3 1088.0,247.3 1087.0,247.3 1086.0,247.3 1085.0,247.3 1084.0,247.3 1083.0,247.3 1082.0,247.3 1081.0,247.3 1080.0,247.3 1079.0,247.3 1078.0,247.3 1077.0,247.3 1076.0,247.3 1075.0,247.3 1074.0,247.3 1073.0,247.3 1072.0,247.3 1071.0,247.3 1070.0,247.3 1069.0,247.3 1068.0,247.3 1067.0,247.3 1066.0,247.3 1065.0,247.3 1064.0,247.7 1063.0,248.3 1062.0,248.9 1061.0,249.1 1060.0,249.0 1059.0,249.2 1058.0,249.4 1057.0,249.8 1056.0,249.7 1055.0,249.9 1054.0,250.0 1053.0,250.3 1052.0,250.5 1051.0,250.8 1050.0,251.0 1049.0,251.2 1048.0,250.7 1047.0,250.6 1046.0,250.1 1045.0,249.6 1044.0,249.3 1043.0,249.5 1042.0,249.4 1041.0,249.4 1040.0,249.6 1039.0,249.4 1038.0,249.8 1037.0,249.7 1036.0,249.6 1035.0,249.8 1034.0,249.9 1033.0,249.7 1032.0,249.9 1031.0,249.8 1030.0,250.0 1029.0,250.0 1028.0,250.2 1027.0,250.1 1026.0,250.4 1025.0,250.3 1024.0,250.3 1023.0,250.2 1022.0,250.0 1021.0,250.0 1020.0,249.9 1019.0,249.8 1018.0,249.6 1017.0,249.2 1016.0,249.0 1015.0,248.9 1014.0,248.5 1013.0,248.2 1012.0,247.9 1011.0,247.8 1010.0,247.7 1009.0,247.6 1008.0,247.4 1007.0,247.4 1006.0,247.4 1005.0,247.4 1004.0,247.4 1003.0,247.4 1002.0,247.4 1001.0,247.4 1000.0,247.4 999.0,247.4 998.0,247.4 997.0,247.4 996.0,247.4 995.0,247.4 994.0,247.4 993.0,247.4 992.0,247.4 991.0,247.4 990.0,247.4 989.0,247.4 988.0,247.4 987.0,247.4 986.0,247.4 985.0,247.4 984.0,247.4 983.0,247.4 982.0,247.4 981.0,247.4 980.0,247.4 979.0,247.4 978.0,247.4 977.0,247.4 976.0,247.4 975.0,247.4 974.0,247.4 973.0,247.4 972.0,247.4 971.0,247.4 970.0,247.4 969.0,247.4 968.0,247.5 967.0,247.5 966.0,247.5 965.0,247.6 964.0,247.6 963.0,247.6 962.0,247.7 961.0,247.7 960.0,248.1 959.0,248.6 958.0,249.2 957.0,249.9 956.0,250.1 955.0,251.1 954.0,251.2 953.0,252.2 952.0,252.7 951.0,253.5 950.0,253.2 949.0,253.5 948.0,253.7 947.0,253.2 946.0,253.2 945.0,253.7 944.0,253.6 943.0,253.9 942.0,253.3 941.0,253.3 940.0,253.8 939.0,253.9 938.0,253.5 937.0,253.2 936.0,253.4 935.0,253.6 934.0,252.8 933.0,252.7 932.0,252.4 931.0,250.4 930.0,247.8 929.0,247.3 928.0,247.3 927.0,247.3 926.0,247.9 925.0,248.8 924.0,249.7 923.0,250.1 922.0,251.1 921.0,251.9 920.0,252.5 919.0,253.1 918.0,254.2 917.0,255.1 916.0,255.3 915.0,256.3 914.0,256.0 913.0,256.0 912.0,256.2 911.0,256.5 910.0,256.5 909.0,256.3 908.0,257.8 907.0,259.2 906.0,259.2 905.0,259.0 904.0,259.8 903.0,258.6 902.0,259.6 901.0,259.4 900.0,258.3 899.0,258.9 898.0,258.9 897.0,258.1 896.0,259.0 895.0,251.2 894.0,251.2 893.0,250.9 892.0,250.9 891.0,250.9 890.0,251.0 889.0,250.9 888.0,250.9 887.0,253.3 886.0,255.8 885.0,257.6 884.0,259.4 883.0,262.8 882.0,265.0 881.0,269.4 880.0,268.6 879.0,260.0 878.0,252.5 877.0,249.4 876.0,249.5 875.0,249.4 874.0,249.4 873.0,249.4 872.0,249.4 871.0,249.5 870.0,248.8 869.0,248.0 868.0,247.3 867.0,247.3 866.0,247.3 865.0,247.3 864.0,247.3 863.0,247.3 862.0,247.3 861.0,247.3 860.0,247.3 859.0,247.3 858.0,247.3 857.0,247.9 856.0,248.6 855.0,249.3 854.0,249.6 853.0,249.5 852.0,249.6 851.0,249.8 850.0,249.7 849.0,250.0 848.0,250.0 847.0,250.1 846.0,250.1 845.0,249.8 844.0,249.5 843.0,249.1 842.0,248.7 841.0,249.1 840.0,249.5 839.0,250.2 838.0,250.9 837.0,251.3 836.0,252.3 835.0,252.9 834.0,253.6 833.0,254.6 832.0,254.4 831.0,255.1 830.0,255.1 829.0,255.2 828.0,255.3 827.0,256.1 826.0,255.5 825.0,256.0 824.0,256.0 823.0,256.6 822.0,256.4 821.0,256.7 820.0,256.8 819.0,257.0 818.0,258.0 817.0,258.3 816.0,257.9 815.0,258.8 814.0,258.4 813.0,258.6 812.0,259.0 811.0,257.6 810.0,257.8 809.0,258.3 808.0,258.0 807.0,258.3 806.0,258.7 805.0,258.4 804.0,257.5 803.0,258.3 802.0,258.3 801.0,257.3 800.0,257.2 799.0,257.1 798.0,257.8 797.0,258.0 796.0,257.2 795.0,257.1 794.0,257.8 793.0,257.5 792.0,256.8 791.0,257.3 790.0,256.5 789.0,256.8 788.0,257.1 787.0,257.1 786.0,257.3 785.0,257.0 784.0,256.3 783.0,257.2 782.0,257.0 781.0,256.8 780.0,256.4 779.0,255.3 778.0,253.9 777.0,252.4 776.0,252.8 775.0,253.2 774.0,253.6 773.0,254.1 772.0,256.4 771.0,259.1 770.0,261.7 769.0,262.7 768.0,265.2 767.0,266.2 766.0,265.1 765.0,264.4 764.0,263.2 763.0,262.5 762.0,253.3 761.0,249.4 760.0,249.3 759.0,249.5 758.0,251.4 757.0,254.0 756.0,255.2 755.0,256.5 754.0,257.5 753.0,257.8 752.0,259.0 751.0,261.8 750.0,263.5 749.0,264.4 748.0,263.2 747.0,263.6 746.0,262.4 745.0,258.5 744.0,253.8 743.0,253.6 742.0,252.9 741.0,252.2 740.0,252.3 739.0,251.7 738.0,252.0 737.0,252.3 736.0,251.8 735.0,252.0 734.0,252.5 733.0,252.2 732.0,252.4 731.0,252.3 730.0,252.3 729.0,252.7 728.0,252.7 727.0,253.2 726.0,253.1 725.0,252.6 724.0,252.9 723.0,252.9 722.0,252.9 721.0,252.9 720.0,253.3 719.0,253.6 718.0,252.9 717.0,253.0 716.0,252.6 715.0,252.4 714.0,252.1 713.0,252.0 712.0,253.3 711.0,256.3 710.0,256.3 709.0,256.2 708.0,256.2 707.0,256.8 706.0,256.2 705.0,256.6 704.0,256.5 703.0,257.0 702.0,257.1 701.0,257.0 700.0,255.7 699.0,253.0 698.0,253.4 697.0,253.4 696.0,253.3 695.0,253.4 694.0,253.6 693.0,253.2 692.0,253.1 691.0,253.1 690.0,252.7 689.0,252.9 688.0,253.1 687.0,253.0 686.0,252.8 685.0,252.8 684.0,252.7 683.0,252.7 682.0,253.3 681.0,253.2 680.0,252.8 679.0,252.8 678.0,252.7 677.0,253.1 676.0,253.0 675.0,253.1 674.0,252.8 673.0,252.7 672.0,252.4 671.0,253.0 670.0,252.6 669.0,252.5 668.0,252.4 667.0,252.8 666.0,252.3 665.0,252.3 664.0,252.3 663.0,252.5 662.0,252.1 661.0,252.6 660.0,252.4 659.0,252.3 658.0,252.6 657.0,252.7 656.0,252.5 655.0,252.5 654.0,252.0 653.0,252.4 652.0,252.2 651.0,252.5 650.0,252.4 649.0,252.2 648.0,252.5 647.0,252.7 646.0,253.0 645.0,252.9 644.0,253.5 643.0,253.2 642.0,252.9 641.0,252.4 640.0,251.5 639.0,251.3 638.0,250.7 637.0,250.5 636.0,249.9 635.0,248.6 634.0,247.5 633.0,247.3 632.0,247.3 631.0,247.3 630.0,247.3 629.0,247.3 628.0,247.3 627.0,247.3 626.0,247.3 625.0,247.3 624.0,247.3 623.0,247.3 622.0,247.3 621.0,247.3 620.0,247.3 619.0,247.3 618.0,247.3 617.0,247.3 616.0,247.3 615.0,247.3 614.0,247.3 613.0,247.3 612.0,247.3 611.0,247.3 610.0,247.3 609.0,247.3 608.0,247.3 607.0,247.3 606.0,247.3 605.0,247.3 604.0,247.3 603.0,247.3 602.0,247.3 601.0,247.3 600.0,247.3 599.0,247.3 598.0,247.3 597.0,247.3 596.0,247.3 595.0,247.3 594.0,247.3 593.0,247.3 592.0,247.3 591.0,247.3 590.0,247.3 589.0,247.3 588.0,247.3 587.0,247.3 586.0,247.3 585.0,247.3 584.0,247.3 583.0,247.3 582.0,247.3 581.0,247.3 580.0,247.3 579.0,247.3 578.0,247.3 577.0,247.3 576.0,247.3 575.0,247.3 574.0,247.3 573.0,247.3 572.0,247.3 571.0,247.3 570.0,247.3 569.0,247.3 568.0,247.3 567.0,247.3 566.0,247.3 565.0,247.3 564.0,247.3 563.0,247.3 562.0,247.3 561.0,247.3 560.0,247.3 559.0,247.3 558.0,247.3 557.0,247.3 556.0,247.3 555.0,247.3 554.0,247.3 553.0,247.5 552.0,247.8 551.0,248.1 550.0,248.6 549.0,248.7 548.0,249.1 547.0,249.4 546.0,249.4 545.0,249.7 544.0,249.7 543.0,250.1 542.0,250.3 541.0,250.3 540.0,250.5 539.0,250.8 538.0,250.6 537.0,250.7 536.0,250.8 535.0,250.5 534.0,250.4 533.0,250.4 532.0,250.6 531.0,250.5 530.0,250.6 529.0,250.6 528.0,250.4 527.0,250.7 526.0,250.4 525.0,250.3 524.0,250.3 523.0,250.3 522.0,250.6 521.0,250.2 520.0,250.6 519.0,250.3 518.0,250.4 517.0,250.5 516.0,250.3 515.0,250.1 514.0,250.1 513.0,250.4 512.0,250.2 511.0,250.0 510.0,250.0 509.0,250.1 508.0,249.9 507.0,250.1 506.0,249.9 505.0,250.0 504.0,250.1 503.0,249.8 502.0,250.1 501.0,249.8 500.0,249.9" fill="#8e8e8e"/>
<rect x="0" y="290" width="1634" height="2" fill="#1c1c1c"/>
<path d="M21.8,311.5 L30,321.5 L38.2,311.5" fill="none" stroke="#e0e0e0" stroke-width="3.6"/>
<text x="59.4" y="324.9" font-size="24.5" fill="#e4e4e4" font-weight="normal" text-anchor="start" textLength="121" lengthAdjust="spacingAndGlyphs" stroke="#e4e4e4" stroke-width="0.55">Piano Roll</text>
<clipPath id="g228"><rect x="228" y="300" width="94" height="32" rx="5"/></clipPath>
<g clip-path="url(#g228)">
<rect x="228" y="300" width="46" height="32" fill="#939393"/>
<rect x="276" y="300" width="46" height="32" fill="#414141"/>
</g>
<clipPath id="g376"><rect x="376" y="300" width="94" height="32" rx="5"/></clipPath>
<g clip-path="url(#g376)">
<rect x="376" y="300" width="46" height="32" fill="#939393"/>
<rect x="424" y="300" width="46" height="32" fill="#414141"/>
</g>
<clipPath id="g496"><rect x="496" y="300" width="238" height="32" rx="5"/></clipPath>
<g clip-path="url(#g496)">
<rect x="496" y="300" width="46" height="32" fill="#939393"/>
<rect x="544" y="300" width="46" height="32" fill="#414141"/>
<rect x="592" y="300" width="46" height="32" fill="#939393"/>
<rect x="640" y="300" width="46" height="32" fill="#939393"/>
<rect x="688" y="300" width="46" height="32" fill="#939393"/>
</g>
<path d="M247,326 L247,308.5 L259,319 L251,319 L247,323" fill="none" stroke="#363636" stroke-width="2"/>
<g transform="translate(299.2,316.6) rotate(-40)"><path d="M-4.5,-2.9 L8,-2.9 L10,0 L8,2.9 L-4.5,2.9 Z" fill="none" stroke="#939393" stroke-width="1.9" stroke-linejoin="round"/><path d="M-4.5,-3.8 L-9.5,-2 L-10.2,0 L-9.5,2 L-4.5,3.8 Z" fill="#939393"/></g>
<rect x="335" y="311" width="28" height="12" rx="6" fill="none" stroke="#939393" stroke-width="2"/>
<rect x="342" y="316" width="14" height="2.2" fill="#939393"/>
<rect x="386" y="320" width="14" height="4" fill="#363636"/>
<rect x="394" y="314" width="12" height="4" fill="#363636"/>
<rect x="400" y="308" width="14" height="4" fill="#363636"/>
<path d="M437,321 L444.6,311.8 Q445.5,310.8 446.3,312 L449.8,320 Q450.5,321.2 451.4,320.2 L459,311" fill="none" stroke="#939393" stroke-width="2.3" stroke-linejoin="round"/>
<circle cx="437" cy="321" r="3.2" fill="#939393"/><circle cx="459" cy="311" r="3.2" fill="#939393"/>
<path d="M508,323.5 C512,317 515,316.5 519,316.5 C523,316.5 527,317 532,308.5" fill="none" stroke="#363636" stroke-width="2.2"/>
<path d="M556.5,322.5 L565,311.5 L570.5,321 L580,309.8" fill="none" stroke="#939393" stroke-width="2.2" stroke-linejoin="round" stroke-linecap="round"/>
<rect x="600" y="312" width="2" height="8" fill="#363636"/>
<rect x="604" y="310.2" width="2" height="11.800000000000011" fill="#363636"/>
<rect x="608" y="308.3" width="2" height="15.399999999999977" fill="#363636"/>
<rect x="612" y="310.2" width="2" height="11.800000000000011" fill="#363636"/>
<rect x="616" y="308.3" width="2" height="15.399999999999977" fill="#363636"/>
<rect x="620" y="306" width="2" height="19.80000000000001" fill="#363636"/>
<rect x="624" y="308.3" width="2" height="15.399999999999977" fill="#363636"/>
<rect x="628" y="312" width="2" height="8" fill="#363636"/>
<rect x="650" y="308" width="2" height="16" fill="#363636"/>
<rect x="674.5" y="308" width="2" height="16" fill="#363636"/>
<text x="663" y="324" font-size="25" fill="#363636" font-weight="normal" text-anchor="middle" textLength="11" lengthAdjust="spacingAndGlyphs">a</text>
<path d="M698,306 L722,306 L722,311.5 L698,311.5 Z" fill="#363636"/>
<path d="M703,311.5 L706,306 L708,306 L705,311.5 Z" fill="#939393"/>
<path d="M710,311.5 L713,306 L715,306 L712,311.5 Z" fill="#939393"/>
<path d="M717,311.5 L720,306 L722,306 L719,311.5 Z" fill="#939393"/>
<path d="M698,313 L722,313 L722,323 Q722,326 719,326 L701,326 Q698,326 698,323 Z" fill="#363636"/>
<text x="760.7" y="323.1" font-size="22" fill="#8c8c8c" font-weight="normal" text-anchor="start" textLength="59.6" lengthAdjust="spacingAndGlyphs">SNAP:</text>
<text x="840.2" y="323.1" font-size="22" fill="#8c8c8c" font-weight="normal" text-anchor="start" textLength="88.3" lengthAdjust="spacingAndGlyphs">Adaptive</text>
<rect x="1628" y="306" width="8" height="4" fill="#e6e6e6"/>
<rect x="1628" y="314" width="8" height="4" fill="#e6e6e6"/>
<rect x="1628" y="322" width="8" height="4" fill="#e6e6e6"/>
<rect x="380" y="368" width="2" height="24" fill="#c8c8c8"/>
<text x="390.6" y="385.6" font-size="21" fill="#c8c8c8" font-weight="normal" text-anchor="start" textLength="20.2" lengthAdjust="spacingAndGlyphs">19</text>
<rect x="838" y="368" width="2" height="24" fill="#c8c8c8"/>
<text x="848.6" y="385.6" font-size="21" fill="#c8c8c8" font-weight="normal" text-anchor="start" textLength="20.2" lengthAdjust="spacingAndGlyphs">20</text>
<rect x="1298" y="368" width="2" height="24" fill="#c8c8c8"/>
<text x="1308.6" y="385.6" font-size="21" fill="#c8c8c8" font-weight="normal" text-anchor="start" textLength="20.2" lengthAdjust="spacingAndGlyphs">21</text>
<rect x="104" y="392" width="1530" height="828" fill="#2a2a2a"/>
<rect x="104" y="406" width="1530" height="48" fill="#222222"/>
<rect x="104" y="452.5" width="1530" height="1.5" fill="#1f1f1f"/>
<rect x="104" y="550" width="1530" height="48" fill="#222222"/>
<rect x="104" y="596.5" width="1530" height="1.5" fill="#1f1f1f"/>
<rect x="104" y="646" width="1530" height="48" fill="#222222"/>
<rect x="104" y="692.5" width="1530" height="1.5" fill="#1f1f1f"/>
<rect x="104" y="790" width="1530" height="48" fill="#222222"/>
<rect x="104" y="836.5" width="1530" height="1.5" fill="#1f1f1f"/>
<rect x="104" y="886" width="1530" height="48" fill="#222222"/>
<rect x="104" y="932.5" width="1530" height="1.5" fill="#1f1f1f"/>
<rect x="104" y="982" width="1530" height="48" fill="#222222"/>
<rect x="104" y="1028.5" width="1530" height="1.5" fill="#1f1f1f"/>
<rect x="104" y="1126" width="1530" height="48" fill="#222222"/>
<rect x="104" y="1172.5" width="1530" height="1.5" fill="#1f1f1f"/>
<rect x="104" y="1222" width="1530" height="48" fill="#222222"/>
<rect x="104" y="1268.5" width="1530" height="1.5" fill="#1f1f1f"/>
<rect x="104" y="500" width="1530" height="2" fill="#1a1a1a"/>
<rect x="104" y="740" width="1530" height="2" fill="#1a1a1a"/>
<rect x="104" y="1076" width="1530" height="2" fill="#1a1a1a"/>
<rect x="122" y="392" width="2" height="828" fill="#1d1d1d"/>
<rect x="149.75" y="392" width="2.5" height="828" fill="#141414"/>
<rect x="178" y="392" width="2" height="828" fill="#1d1d1d"/>
<rect x="208" y="392" width="2" height="828" fill="#1d1d1d"/>
<rect x="236" y="392" width="2" height="828" fill="#1d1d1d"/>
<rect x="263.75" y="392" width="2.5" height="828" fill="#141414"/>
<rect x="294" y="392" width="2" height="828" fill="#1d1d1d"/>
<rect x="322" y="392" width="2" height="828" fill="#1d1d1d"/>
<rect x="350" y="392" width="2" height="828" fill="#1d1d1d"/>
<rect x="379.75" y="392" width="2.5" height="828" fill="#141414"/>
<rect x="408" y="392" width="2" height="828" fill="#1d1d1d"/>
<rect x="436" y="392" width="2" height="828" fill="#1d1d1d"/>
<rect x="466" y="392" width="2" height="828" fill="#1d1d1d"/>
<rect x="493.75" y="392" width="2.5" height="828" fill="#141414"/>
<rect x="522" y="392" width="2" height="828" fill="#1d1d1d"/>
<rect x="552" y="392" width="2" height="828" fill="#1d1d1d"/>
<rect x="580" y="392" width="2" height="828" fill="#1d1d1d"/>
<rect x="607.75" y="392" width="2.5" height="828" fill="#141414"/>
<rect x="638" y="392" width="2" height="828" fill="#1d1d1d"/>
<rect x="666" y="392" width="2" height="828" fill="#1d1d1d"/>
<rect x="694" y="392" width="2" height="828" fill="#1d1d1d"/>
<rect x="723.75" y="392" width="2.5" height="828" fill="#141414"/>
<rect x="752" y="392" width="2" height="828" fill="#1d1d1d"/>
<rect x="782" y="392" width="2" height="828" fill="#1d1d1d"/>
<rect x="810" y="392" width="2" height="828" fill="#1d1d1d"/>
<rect x="837.75" y="392" width="2.5" height="828" fill="#141414"/>
<rect x="868" y="392" width="2" height="828" fill="#1d1d1d"/>
<rect x="896" y="392" width="2" height="828" fill="#1d1d1d"/>
<rect x="924" y="392" width="2" height="828" fill="#1d1d1d"/>
<rect x="953.75" y="392" width="2.5" height="828" fill="#141414"/>
<rect x="982" y="392" width="2" height="828" fill="#1d1d1d"/>
<rect x="1010" y="392" width="2" height="828" fill="#1d1d1d"/>
<rect x="1040" y="392" width="2" height="828" fill="#1d1d1d"/>
<rect x="1067.75" y="392" width="2.5" height="828" fill="#141414"/>
<rect x="1096" y="392" width="2" height="828" fill="#1d1d1d"/>
<rect x="1126" y="392" width="2" height="828" fill="#1d1d1d"/>
<rect x="1154" y="392" width="2" height="828" fill="#1d1d1d"/>
<rect x="1181.75" y="392" width="2.5" height="828" fill="#141414"/>
<rect x="1212" y="392" width="2" height="828" fill="#1d1d1d"/>
<rect x="1240" y="392" width="2" height="828" fill="#1d1d1d"/>
<rect x="1268" y="392" width="2" height="828" fill="#1d1d1d"/>
<rect x="1297.75" y="392" width="2.5" height="828" fill="#141414"/>
<rect x="1326" y="392" width="2" height="828" fill="#1d1d1d"/>
<rect x="1354" y="392" width="2" height="828" fill="#1d1d1d"/>
<rect x="1384" y="392" width="2" height="828" fill="#1d1d1d"/>
<rect x="1411.75" y="392" width="2.5" height="828" fill="#141414"/>
<rect x="1440" y="392" width="2" height="828" fill="#1d1d1d"/>
<rect x="1470" y="392" width="2" height="828" fill="#1d1d1d"/>
<rect x="1498" y="392" width="2" height="828" fill="#1d1d1d"/>
<rect x="1527.75" y="392" width="2.5" height="828" fill="#141414"/>
<rect x="1556" y="392" width="2" height="828" fill="#1d1d1d"/>
<rect x="1584" y="392" width="2" height="828" fill="#1d1d1d"/>
<rect x="1614" y="392" width="2" height="828" fill="#1d1d1d"/>
<clipPath id="pk"><rect x="0" y="392" width="104" height="828"/></clipPath><g clip-path="url(#pk)">
<rect x="0" y="392" width="104" height="828" fill="#262626"/>
<path d="M2,329.3 L97,329.3 Q102,329.3 102,334.3 L102,404.6 Q102,409.6 97,409.6 L2,409.6 Z" fill="#afafaf"/>
<path d="M2,411.6 L97,411.6 Q102,411.6 102,416.6 L102,486.9 Q102,491.9 97,491.9 L2,491.9 Z" fill="#afafaf"/>
<path d="M2,493.9 L97,493.9 Q102,493.9 102,498.9 L102,569.2 Q102,574.2 97,574.2 L2,574.2 Z" fill="#afafaf"/>
<path d="M2,576.2 L97,576.2 Q102,576.2 102,581.2 L102,651.5 Q102,656.5 97,656.5 L2,656.5 Z" fill="#afafaf"/>
<path d="M2,658.5 L97,658.5 Q102,658.5 102,663.5 L102,733.8 Q102,738.8 97,738.8 L2,738.8 Z" fill="#afafaf"/>
<path d="M2,740.8 L97,740.8 Q102,740.8 102,745.8 L102,816.1 Q102,821.1 97,821.1 L2,821.1 Z" fill="#afafaf"/>
<path d="M2,823.1 L97,823.1 Q102,823.1 102,828.1 L102,898.4 Q102,903.4 97,903.4 L2,903.4 Z" fill="#afafaf"/>
<path d="M2,905.4 L97,905.4 Q102,905.4 102,910.4 L102,980.7 Q102,985.7 97,985.7 L2,985.7 Z" fill="#afafaf"/>
<path d="M2,987.7 L97,987.7 Q102,987.7 102,992.7 L102,1063.0 Q102,1068.0 97,1068.0 L2,1068.0 Z" fill="#afafaf"/>
<path d="M2,1070.0 L97,1070.0 Q102,1070.0 102,1075.0 L102,1145.2 Q102,1150.2 97,1150.2 L2,1150.2 Z" fill="#afafaf"/>
<path d="M2,1152.2 L97,1152.2 Q102,1152.2 102,1157.2 L102,1227.5 Q102,1232.5 97,1232.5 L2,1232.5 Z" fill="#afafaf"/>
<path d="M2,1234.5 L97,1234.5 Q102,1234.5 102,1239.5 L102,1309.8 Q102,1314.8 97,1314.8 L2,1314.8 Z" fill="#afafaf"/>
<path d="M2,405.0 L46,405.0 Q51,405.0 51,410.0 L51,448.0 Q51,453.0 46,453.0 L2,453.0 Z" fill="#1c1c1c"/>
<path d="M2,549.0 L46,549.0 Q51,549.0 51,554.0 L51,592.0 Q51,597.0 46,597.0 L2,597.0 Z" fill="#1c1c1c"/>
<path d="M2,645.0 L46,645.0 Q51,645.0 51,650.0 L51,688.0 Q51,693.0 46,693.0 L2,693.0 Z" fill="#1c1c1c"/>
<path d="M2,789.0 L46,789.0 Q51,789.0 51,794.0 L51,832.0 Q51,837.0 46,837.0 L2,837.0 Z" fill="#1c1c1c"/>
<path d="M2,885.0 L46,885.0 Q51,885.0 51,890.0 L51,928.0 Q51,933.0 46,933.0 L2,933.0 Z" fill="#1c1c1c"/>
<path d="M2,981.0 L46,981.0 Q51,981.0 51,986.0 L51,1024.0 Q51,1029.0 46,1029.0 L2,1029.0 Z" fill="#1c1c1c"/>
<path d="M2,1125.0 L46,1125.0 Q51,1125.0 51,1130.0 L51,1168.0 Q51,1173.0 46,1173.0 L2,1173.0 Z" fill="#1c1c1c"/>
<path d="M2,1221.0 L46,1221.0 Q51,1221.0 51,1226.0 L51,1264.0 Q51,1269.0 46,1269.0 L2,1269.0 Z" fill="#1c1c1c"/>
</g>
<text x="57" y="725" font-size="22.5" fill="#6e6e6e" font-weight="normal" text-anchor="start" textLength="24" lengthAdjust="spacingAndGlyphs">C4</text>
<polygon points="149.2,1028.7 149.8,1018.7 151.0,1011.7 153.0,1005.7 155.6,1001.7 155.6,1001.7 161.9,1001.7 161.9,1002.7 168.2,1002.7 168.2,1003.8 174.5,1003.8 174.5,1004.8 180.7,1004.8 180.7,1005.8 187.0,1005.8 187.0,1006.8 193.3,1006.8 193.3,1007.9 199.6,1007.9 199.6,1008.9 205.9,1008.9 205.9,1009.9 212.2,1009.9 212.2,1010.9 218.4,1010.9 218.4,1012.0 224.7,1012.0 224.7,1013.0 231.0,1013.0 231.0,1014.0 237.3,1014.0 237.8,1014.8 238.3,1015.8 238.8,1016.8 239.2,1018.0 239.7,1019.4 240.2,1022.2 241.2,1015.2 242.3,1011.6 243.3,1008.7 244.4,1006.1 245.4,1003.8 246.5,1001.7 246.5,1001.7 252.9,1001.7 252.9,1003.4 259.4,1003.4 259.4,1005.0 265.8,1005.0 265.8,1006.7 272.2,1006.7 273.0,1008.2 273.7,1009.7 274.5,1011.5 275.3,1013.5 276.0,1015.9 276.8,1020.7 277.9,1014.2 278.9,1010.9 280.0,1008.2 281.1,1005.8 282.1,1003.7 283.2,1001.7 283.2,1001.7 289.6,1001.7 289.6,1002.8 296.1,1002.8 296.1,1004.0 302.5,1004.0 302.5,1005.1 308.9,1005.1 308.9,1006.3 315.3,1006.3 315.3,1007.4 321.8,1007.4 321.8,1008.6 328.2,1008.6 328.2,1009.7 334.6,1009.7 335.2,1011.0 335.8,1012.5 336.5,1014.1 337.1,1016.0 337.7,1018.3 338.3,1022.7 338.9,1015.5 339.5,1011.8 340.1,1008.8 340.8,1006.2 341.4,1003.9 342.0,1001.7 342.0,1001.7 348.0,1001.7 348.0,1002.6 354.0,1002.6 354.0,1003.5 360.0,1003.5 360.0,1004.4 366.0,1004.4 366.0,1005.3 372.0,1005.3 372.0,1006.2 378.0,1006.2 378.0,1007.2 384.7,1007.2 384.7,1008.1 391.3,1008.1 391.3,1009.1 398.0,1009.1 398.0,1010.0 404.7,1010.0 404.7,1011.0 411.3,1011.0 411.3,1011.9 418.0,1011.9 418.0,1012.8 424.7,1012.8 424.7,1013.8 431.3,1013.8 431.3,1014.7 438.0,1014.7 438.0,1016.2 449.5,1016.2 449.5,1017.7 461.0,1017.7 461.0,1019.2 486.0,1019.2 486.0,1021.7 519.6,1021.7 519.6,1023.9 680.6,1023.9 680.7,1023.9 680.8,1023.9 680.9,1023.9 681.0,1023.9 682.8,1014.5 684.6,1009.6 686.5,1005.7 688.3,1002.3 688.3,1002.3 694.4,1002.3 694.4,1003.6 700.5,1003.6 700.5,1004.9 706.6,1004.9 706.6,1006.1 712.8,1006.1 712.8,1007.4 718.9,1007.4 718.9,1008.7 725.0,1008.7 726.1,1009.9 727.2,1011.3 728.4,1012.8 729.5,1014.5 730.6,1016.6 731.7,1020.7 732.5,1014.2 733.3,1010.9 734.1,1008.2 734.9,1005.8 735.7,1003.7 736.5,1001.7 760.0,1001.7 760.0,1055.7 736.5,1055.7 735.7,1053.7 734.9,1051.6 734.1,1049.2 733.3,1046.5 732.5,1043.2 731.7,1036.7 730.6,1040.8 729.5,1042.9 728.4,1044.6 727.2,1046.1 726.1,1047.5 725.0,1048.7 718.9,1048.7 718.9,1050.0 712.8,1050.0 712.8,1051.3 706.6,1051.3 706.6,1052.5 700.5,1052.5 700.5,1053.8 694.4,1053.8 694.4,1055.1 688.3,1055.1 688.3,1055.1 686.5,1051.7 684.6,1047.8 682.8,1042.9 681.0,1033.5 680.9,1033.5 680.8,1033.5 680.7,1033.5 680.6,1033.5 519.6,1033.5 519.6,1035.7 486.0,1035.7 486.0,1038.2 461.0,1038.2 461.0,1039.7 449.5,1039.7 449.5,1041.2 438.0,1041.2 438.0,1042.7 431.3,1042.7 431.3,1043.6 424.7,1043.6 424.7,1044.6 418.0,1044.6 418.0,1045.5 411.3,1045.5 411.3,1046.5 404.7,1046.5 404.7,1047.4 398.0,1047.4 398.0,1048.3 391.3,1048.3 391.3,1049.3 384.7,1049.3 384.7,1050.2 378.0,1050.2 378.0,1051.2 372.0,1051.2 372.0,1052.1 366.0,1052.1 366.0,1053.0 360.0,1053.0 360.0,1053.9 354.0,1053.9 354.0,1054.8 348.0,1054.8 348.0,1055.7 342.0,1055.7 342.0,1055.7 341.4,1053.5 340.8,1051.2 340.1,1048.6 339.5,1045.6 338.9,1041.9 338.3,1034.7 337.7,1039.1 337.1,1041.4 336.5,1043.3 335.8,1044.9 335.2,1046.4 334.6,1047.7 328.2,1047.7 328.2,1048.8 321.8,1048.8 321.8,1050.0 315.3,1050.0 315.3,1051.1 308.9,1051.1 308.9,1052.3 302.5,1052.3 302.5,1053.4 296.1,1053.4 296.1,1054.6 289.6,1054.6 289.6,1055.7 283.2,1055.7 283.2,1055.7 282.1,1053.7 281.1,1051.6 280.0,1049.2 278.9,1046.5 277.9,1043.2 276.8,1036.7 276.0,1041.5 275.3,1043.9 274.5,1045.9 273.7,1047.7 273.0,1049.2 272.2,1050.7 265.8,1050.7 265.8,1052.4 259.4,1052.4 259.4,1054.0 252.9,1054.0 252.9,1055.7 246.5,1055.7 246.5,1055.7 245.4,1053.6 244.4,1051.3 243.3,1048.7 242.3,1045.8 241.2,1042.2 240.2,1035.2 239.7,1038.0 239.2,1039.4 238.8,1040.6 238.3,1041.6 237.8,1042.6 237.3,1043.4 231.0,1043.4 231.0,1044.4 224.7,1044.4 224.7,1045.5 218.4,1045.5 218.4,1046.5 212.2,1046.5 212.2,1047.5 205.9,1047.5 205.9,1048.5 199.6,1048.5 199.6,1049.5 193.3,1049.5 193.3,1050.6 187.0,1050.6 187.0,1051.6 180.7,1051.6 180.7,1052.6 174.5,1052.6 174.5,1053.7 168.2,1053.7 168.2,1054.7 161.9,1054.7 161.9,1055.7 155.6,1055.7 155.6,1055.7 153.0,1051.7 151.0,1045.7 149.8,1038.7 149.2,1028.7" fill="#ffffff" fill-opacity="0.15"/>
<rect x="149" y="1028.2" width="600" height="1" fill="#ffffff" fill-opacity="0.03"/>
<linearGradient id="wg" gradientUnits="userSpaceOnUse" x1="1135" y1="0" x2="1180" y2="0"><stop offset="0" stop-color="#fff" stop-opacity="0"/><stop offset="1" stop-color="#fff" stop-opacity="0.15"/></linearGradient>
<polygon points="1132.0,1124.5 1136.0,1104.5 1140.0,1102.2 1296.0,1119.5 1555.0,1120.0 1561.0,1124.0 1561.0,1125.0 1555.0,1129.0 1296.0,1129.5 1140.0,1146.8 1136.0,1144.5 1132.0,1124.5" fill="url(#wg)"/>
<rect x="156.2" y="838.3" width="89.4" height="47.4" fill="#6fa833" rx="5"/>
<rect x="246.5" y="838.3" width="34.9" height="47.4" fill="#6fa833" rx="5"/>
<rect x="282.8" y="838.3" width="59.2" height="47.4" fill="#6fa833" rx="5"/>
<rect x="342" y="742.3" width="345.8" height="47.4" fill="#6fa833" rx="5"/>
<rect x="688" y="838.3" width="47.6" height="47.4" fill="#6fa833" rx="5"/>
<rect x="736.5" y="886.3" width="163.5" height="47.4" fill="#6fa833" rx="5"/>
<rect x="1300" y="982.3" width="263.5" height="47.4" fill="#6fa833" rx="5"/>
<path d="M156.5,868 C159,864 162,861 167,860.7 C180,860 210,861 222,856 C227,853 230,856.5 236,856.5 C242,857 247,868 253,867.5 C258,867 262,856 270,855 C278,855 282,868 288.7,867.7 C294,867 296,861 304,861 L327,860.7 C331,861 333,864 335,858 C339,845 341,790 346,777 C349,765 352,763 358,764 L400,764 C405,764 408,758 413.5,758.5 C420,759 425,782 433.7,782.3 C441.9,782.3 443.8,742.5 452,742.5 C461.5,742.5 463.7,788.2 473.2,788.2 C482.5,788.2 484.5,742.5 493.8,742.5 C503.2,742.5 505.2,788.2 514.6,788.2 C524.1,788.2 526.2,742.5 535.7,742.5 C544.9,742.5 547.0,788.2 556.2,788.2 C565.7,788.2 567.8,742.5 577.3,742.5 C586.7,742.5 588.7,788.2 598.1,788.2 C607.6,788.2 609.7,742.5 619.2,742.5 C628.5,742.5 630.5,788.2 639.8,788.2 C649.0,788.2 651.1,750.6 660.3,750.6 C668,750.6 672,764 677,766 C681,768 683,768 685,775 C688,790 690,840 695,857 C697,862 700,864 705,864 L718,862 C722,861 724,857 727,857 C731,857 734,865 738,880 L742,905" fill="none" stroke="#6e6e6e" stroke-width="2"/>
<text x="173" y="871" font-size="22" fill="#1b2a0c" font-weight="normal" text-anchor="start">what</text>
<text x="254.7" y="871" font-size="22" fill="#1b2a0c" font-weight="normal" text-anchor="start">di</text>
<text x="297" y="871" font-size="22" fill="#1b2a0c" font-weight="normal" text-anchor="start">ah</text>
<text x="358.5" y="775" font-size="22" fill="#1b2a0c" font-weight="normal" text-anchor="start">do</text>
<text x="700" y="871" font-size="22" fill="#1b2a0c" font-weight="normal" text-anchor="start">oo</text>
<path d="M1462,1020 C1470,1000 1476,982 1483,982 C1492,982 1496,1028 1504,1028 C1512,1028 1516,985 1524,985 C1532,985 1537,1014 1543.6,1014 C1549,1014 1552,1005 1557,1005 C1560,1005 1562,1008 1563,1010" fill="none" stroke="#7a7a7a" stroke-width="2.2"/>
<rect x="741.5" y="445.5" width="721" height="682" rx="2" fill="#2b2c2c" stroke="#0c0c0c" stroke-width="1"/>
<clipPath id="dlg"><rect x="744" y="448" width="716" height="677" rx="4"/></clipPath>
<g clip-path="url(#dlg)">
<rect x="744" y="448" width="716" height="677" fill="#2f3030"/>
<rect x="744" y="448" width="78" height="677" fill="#415c2e"/>
</g>
<g stroke="#6fd02f" stroke-width="2.1" stroke-linecap="round"><line x1="777.2" y1="773.3" x2="777.2" y2="775.2"/><line x1="777.2" y1="790.2" x2="777.2" y2="791.9"/><line x1="768.6" y1="782.2" x2="770" y2="782.2"/><line x1="785" y1="782.2" x2="786.6" y2="782.2"/><line x1="770.2" y1="775.6" x2="772.5" y2="777.6"/><line x1="781.9" y1="777.6" x2="784.7" y2="775.6"/><line x1="770.2" y1="789.2" x2="772.5" y2="787"/></g>
<g transform="translate(777.4,782.4) rotate(45.5)"><rect x="-2.3" y="-2.5" width="26.2" height="5" rx="1" fill="#6fd02f"/><rect x="-0.6" y="-0.9" width="7.2" height="1.8" fill="#3a5a28"/></g>
<text x="862" y="518.8" font-size="26" fill="#e8e8e8" font-weight="normal" text-anchor="start" textLength="324" lengthAdjust="spacingAndGlyphs" stroke="#e8e8e8" stroke-width="0.55">Voice-to-MIDI Conversion</text>
<text x="862" y="591.2" font-size="21.5" fill="#999999" font-weight="normal" text-anchor="start" textLength="260" lengthAdjust="spacingAndGlyphs">Note Detection Sensitivity</text>
<text x="1421.6" y="591.2" font-size="21.5" fill="#999999" font-weight="normal" text-anchor="end" textLength="43" lengthAdjust="spacingAndGlyphs">80%</text>
<rect x="862" y="624" width="424" height="4" fill="#9a9a9a"/>
<rect x="1318" y="624" width="104" height="4" fill="#252525"/>
<circle cx="1302" cy="626" r="12" fill="#c8c8c8"/>
<rect x="862" y="668" width="28" height="28" fill="#8e8e8e" rx="4"/>
<path d="M867,682.6 L873,689.5 L884.6,673.8" fill="none" stroke="#2f3030" stroke-width="1.9"/>
<rect x="862" y="720.3" width="28" height="28" fill="#8e8e8e" rx="4"/>
<path d="M867,734.9 L873,741.8 L884.6,726.0999999999999" fill="none" stroke="#2f3030" stroke-width="1.9"/>
<rect x="862.5" y="772.7" width="27" height="27" rx="4" fill="none" stroke="#555" stroke-width="1.2"/>
<rect x="862" y="950.4" width="28" height="28" fill="#8e8e8e" rx="4"/>
<path d="M867,965.0 L873,971.9 L884.6,956.1999999999999" fill="none" stroke="#2f3030" stroke-width="1.9"/>
<text x="901" y="690.7" font-size="21.5" fill="#999999" font-weight="normal" text-anchor="start" textLength="147.3" lengthAdjust="spacingAndGlyphs">Pitch correction</text>
<text x="901" y="742.8" font-size="21.5" fill="#999999" font-weight="normal" text-anchor="start" textLength="262.7" lengthAdjust="spacingAndGlyphs">Phonetic lyrics transcription</text>
<text x="901" y="795" font-size="21.5" fill="#999999" font-weight="normal" text-anchor="start" textLength="333.5" lengthAdjust="spacingAndGlyphs">Transfer pitch onto converted notes</text>
<text x="862.8" y="855.6" font-size="21.5" fill="#999999" font-weight="normal" text-anchor="start" textLength="96.6" lengthAdjust="spacingAndGlyphs">Language</text>
<rect x="862" y="870.2" width="560" height="49.6" fill="#292929" rx="4"/>
<text x="874" y="904.5" font-size="21.5" fill="#aaaaaa" font-weight="normal" text-anchor="start" textLength="46" lengthAdjust="spacingAndGlyphs">Auto</text>
<path d="M1383.2,889.2 L1394,900 L1404.8,889.2" fill="none" stroke="#8e8e8e" stroke-width="4"/>
<text x="900.6" y="972.4" font-size="21.5" fill="#999999" font-weight="normal" text-anchor="start" textLength="220.4" lengthAdjust="spacingAndGlyphs">Multi-threaded analysis</text>
<rect x="862" y="1024" width="272" height="64" fill="#414141" rx="5"/>
<rect x="1150.5" y="1024.5" width="271" height="63" rx="5" fill="none" stroke="#4e4e4e" stroke-width="1"/>
<text x="998" y="1065.1" font-size="21.5" fill="#e6e6e6" font-weight="normal" text-anchor="middle" textLength="29.4" lengthAdjust="spacingAndGlyphs">OK</text>
<text x="1285.8" y="1064.6" font-size="21.5" fill="#e6e6e6" font-weight="normal" text-anchor="middle" textLength="66.5" lengthAdjust="spacingAndGlyphs">Cancel</text>
<rect x="0" y="0" width="2" height="1220" fill="#1e1e1e"/>
</svg>
</body></html>
